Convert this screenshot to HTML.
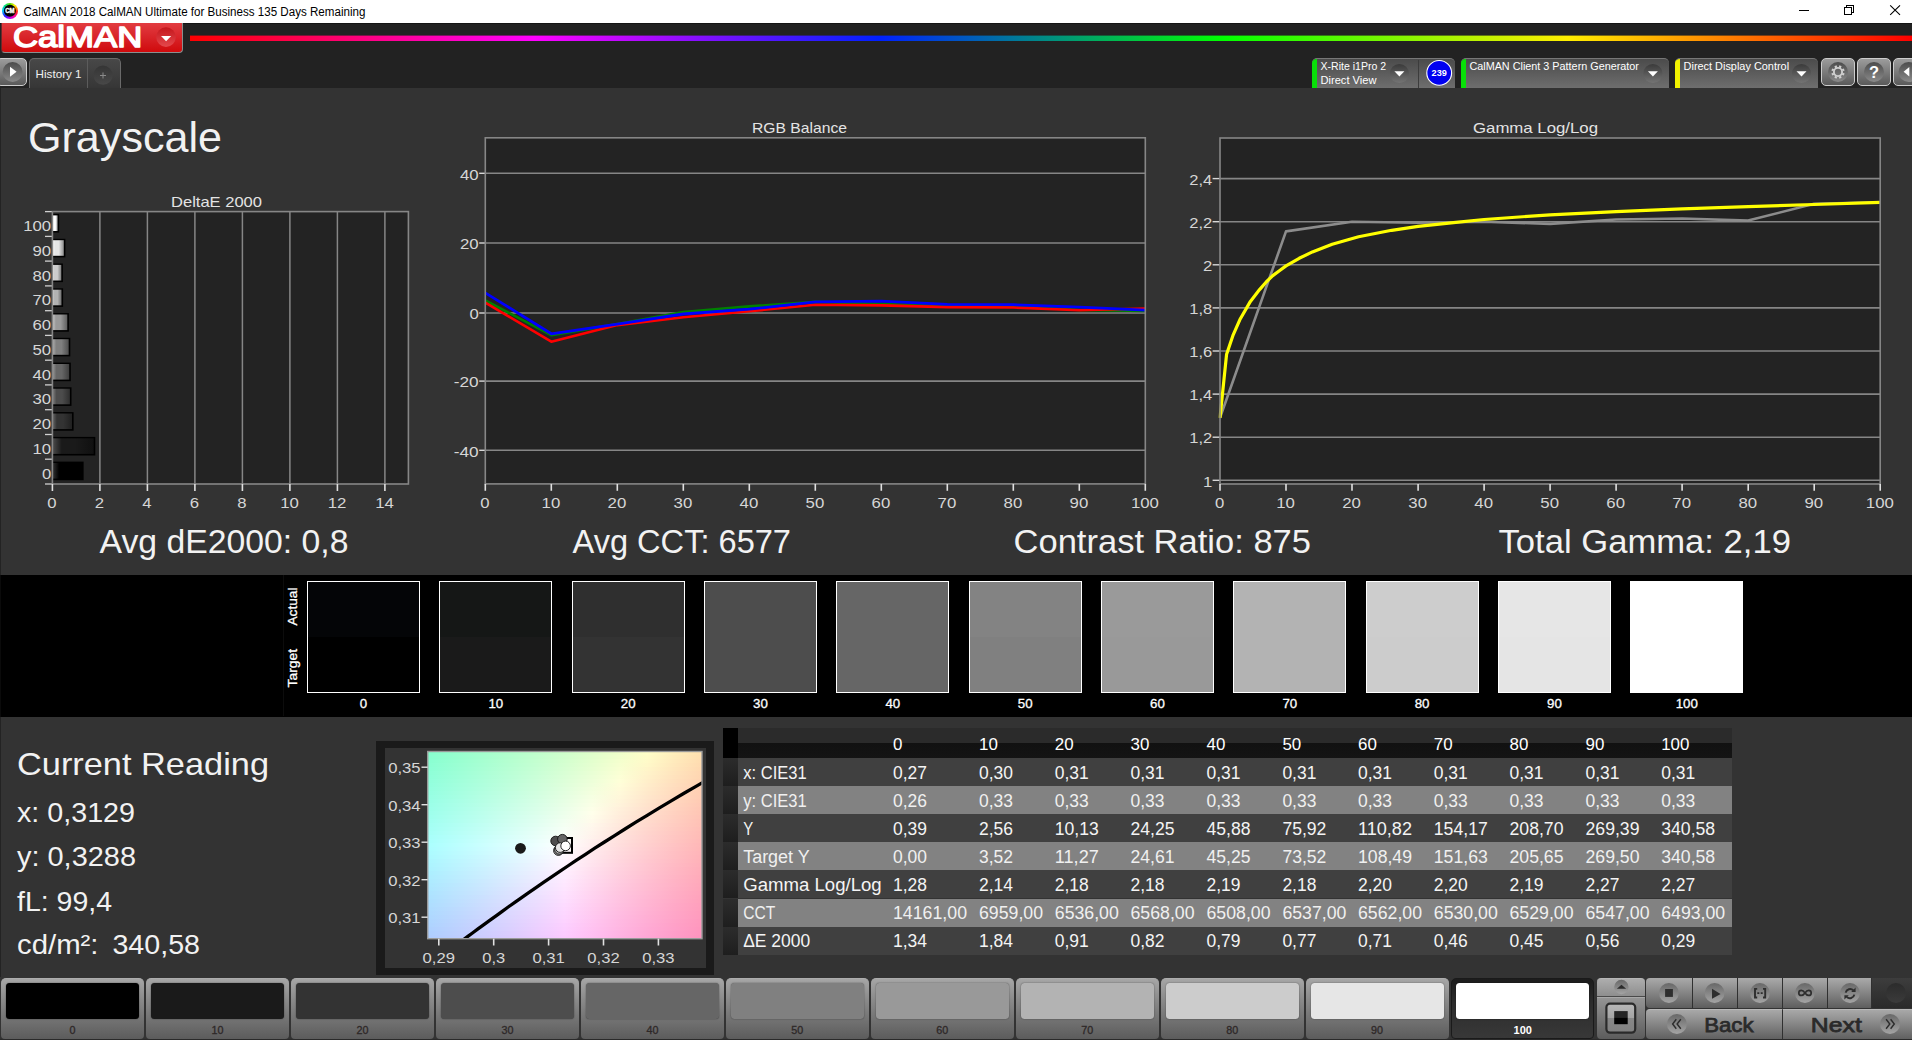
<!DOCTYPE html>
<html lang="en"><head><meta charset="utf-8"><title>CalMAN 2018 - Grayscale</title>
<style>
html,body{margin:0;padding:0;}
body{width:1912px;height:1040px;overflow:hidden;background:#333;position:relative;font-family:"Liberation Sans", sans-serif;}
#root{position:absolute;left:0;top:0;width:1912px;height:1040px;overflow:hidden;}
#root>div{position:absolute;box-sizing:border-box;}
#ov{position:absolute;left:0;top:0;width:1912px;height:1040px;font-family:"Liberation Sans", sans-serif;}
#ov text{white-space:pre;}
</style></head><body>
<div id="root">
<div style="left:0px;top:0px;width:1912px;height:23px;background:#fff;"></div>
<div style="left:1.7px;top:2.6px;width:16.4px;height:16.4px;border-radius:50%;background:conic-gradient(from 0deg,#5d0 0%,#fe0 11%,#f80 19%,#f22 27%,#f0a 40%,#a0f 52%,#22f 63%,#0cf 76%,#0d8 88%,#5d0 100%);filter:blur(0.3px);"></div>
<div style="left:0px;top:23px;width:1912px;height:65px;background:#222;border-top:1px solid #151515;"></div>
<div style="left:189.8px;top:35px;width:1722.2px;height:6.2px;background:linear-gradient(90deg,#ff0000 0%,#ff00ff 20%,#0020ff 40%,#00ff00 60%,#ffee00 80%,#ff0000 100%);opacity:.4;"></div>
<div style="left:189.8px;top:35.7px;width:1722.2px;height:4.9px;background:linear-gradient(90deg,#ff0000 0%,#ff00ff 20%,#0020ff 40%,#00ff00 60%,#ffee00 80%,#ff0000 100%);"></div>
<div style="left:0.6px;top:22.9px;width:182.6px;height:30.2px;background:linear-gradient(#e23c40 0%,#d9262b 45%,#d00a0c 100%);border:1.1px solid #8a8f8f;border-top:none;border-left:1px solid #6a2a2a;border-radius:0 0 4px 4px;"></div>
<div style="left:-4px;top:58px;width:31px;height:28.2px;background:linear-gradient(#9c9c9c,#5a5a5a);border:1px solid #cdcdcd;border-radius:5px;"></div>
<div style="left:29px;top:58px;width:92px;height:30px;background:linear-gradient(#484848,#363636);border:1px solid #6a6a6a;border-bottom:none;border-radius:5px 5px 0 0;"></div>
<div style="left:87px;top:59px;width:1px;height:29px;background:#5c5c5c;"></div>
<div style="left:1311.5px;top:58px;width:143.20000000000005px;height:30px;background:linear-gradient(#4b4b4b,#6e6e6e);border-radius:5px 5px 0 0;border-top:1px solid #777;overflow:hidden;"><div style="position:absolute;left:0;top:-1px;width:5px;height:31px;background:#08e008;"></div></div>
<div style="left:1418px;top:60px;width:1px;height:28px;background:#3c3c3c;"></div>
<div style="left:1460.6px;top:58px;width:208.20000000000005px;height:30px;background:linear-gradient(#4b4b4b,#6e6e6e);border-radius:5px 5px 0 0;border-top:1px solid #777;overflow:hidden;"><div style="position:absolute;left:0;top:-1px;width:5px;height:31px;background:#08e008;"></div></div>
<div style="left:1674.7px;top:58px;width:142.89999999999986px;height:30px;background:linear-gradient(#4b4b4b,#6e6e6e);border-radius:5px 5px 0 0;border-top:1px solid #777;overflow:hidden;"><div style="position:absolute;left:0;top:-1px;width:5px;height:31px;background:#f2f200;"></div></div>
<div style="left:1820.8px;top:58px;width:34.2px;height:28.2px;background:linear-gradient(#9c9c9c,#5a5a5a);border:1px solid #cdcdcd;border-radius:5px;"></div>
<div style="left:1857px;top:58px;width:34px;height:28.2px;background:linear-gradient(#9c9c9c,#5a5a5a);border:1px solid #cdcdcd;border-radius:5px;"></div>
<div style="left:1893px;top:58px;width:37px;height:28.2px;background:linear-gradient(#9c9c9c,#5a5a5a);border:1px solid #cdcdcd;border-radius:5px;"></div>
<div style="left:0px;top:88px;width:1px;height:890px;background:#232323;"></div>
<div style="left:0px;top:574.6px;width:1912px;height:142.7px;background:#000;"></div>
<div style="left:0px;top:574.6px;width:1px;height:142.7px;background:#0a0a0a;"></div>
<div style="left:282.5px;top:575px;width:1px;height:141px;background:#0c0c0c;"></div>
<div style="left:307.0px;top:581px;width:113px;height:112px;border:1px solid #fff;background:linear-gradient(#040507 0,#040507 50%,#000000 50%,#000000 100%);"></div>
<div style="left:439.3px;top:581px;width:113px;height:112px;border:1px solid #fff;background:linear-gradient(#151716 0,#151716 50%,#1a1a1a 50%,#1a1a1a 100%);"></div>
<div style="left:571.7px;top:581px;width:113px;height:112px;border:1px solid #fff;background:linear-gradient(#2f2f2f 0,#2f2f2f 50%,#333333 50%,#333333 100%);"></div>
<div style="left:704.0px;top:581px;width:113px;height:112px;border:1px solid #fff;background:linear-gradient(#4d4d4d 0,#4d4d4d 50%,#4d4d4d 50%,#4d4d4d 100%);"></div>
<div style="left:836.3px;top:581px;width:113px;height:112px;border:1px solid #fff;background:linear-gradient(#666666 0,#666666 50%,#666666 50%,#666666 100%);"></div>
<div style="left:968.7px;top:581px;width:113px;height:112px;border:1px solid #fff;background:linear-gradient(#838383 0,#838383 50%,#808080 50%,#808080 100%);"></div>
<div style="left:1101.0px;top:581px;width:113px;height:112px;border:1px solid #fff;background:linear-gradient(#9a9a9a 0,#9a9a9a 50%,#999999 50%,#999999 100%);"></div>
<div style="left:1233.3px;top:581px;width:113px;height:112px;border:1px solid #fff;background:linear-gradient(#b3b3b3 0,#b3b3b3 50%,#b3b3b3 50%,#b3b3b3 100%);"></div>
<div style="left:1365.6px;top:581px;width:113px;height:112px;border:1px solid #fff;background:linear-gradient(#cdcdcd 0,#cdcdcd 50%,#cccccc 50%,#cccccc 100%);"></div>
<div style="left:1498.0px;top:581px;width:113px;height:112px;border:1px solid #fff;background:linear-gradient(#e6e6e6 0,#e6e6e6 50%,#e5e5e5 50%,#e5e5e5 100%);"></div>
<div style="left:1630.3px;top:581px;width:113px;height:112px;border:1px solid #fff;background:linear-gradient(#ffffff 0,#ffffff 50%,#ffffff 50%,#ffffff 100%);"></div>
<div style="left:376px;top:741px;width:338px;height:234px;background:#1a1a1a;"></div>
<div style="left:384.5px;top:748px;width:321.5px;height:219.5px;background:#333;"></div>
<div style="left:723px;top:728px;width:1009px;height:29.6px;background:linear-gradient(#2b2b2b 0,#2b2b2b 48.5%,#111 50%,#141414 100%);"></div>
<div style="left:723px;top:728px;width:15.2px;height:29.6px;background:#000;"></div>
<div style="left:723px;top:757.6px;width:1009px;height:28.2px;background:#404040;"></div>
<div style="left:723px;top:757.6px;width:15.2px;height:28.2px;background:linear-gradient(#2c2c2c,#1e1e1e);"></div>
<div style="left:723px;top:785.8px;width:1009px;height:28.0px;background:#828282;"></div>
<div style="left:723px;top:785.8px;width:15.2px;height:28.0px;background:linear-gradient(#2c2c2c,#1e1e1e);"></div>
<div style="left:723px;top:813.8px;width:1009px;height:28.2px;background:#404040;"></div>
<div style="left:723px;top:813.8px;width:15.2px;height:28.2px;background:linear-gradient(#2c2c2c,#1e1e1e);"></div>
<div style="left:723px;top:842.0px;width:1009px;height:28.3px;background:#828282;"></div>
<div style="left:723px;top:842.0px;width:15.2px;height:28.3px;background:linear-gradient(#2c2c2c,#1e1e1e);"></div>
<div style="left:723px;top:870.3px;width:1009px;height:28.2px;background:#404040;"></div>
<div style="left:723px;top:870.3px;width:15.2px;height:28.2px;background:linear-gradient(#2c2c2c,#1e1e1e);"></div>
<div style="left:723px;top:898.5px;width:1009px;height:28.3px;background:#828282;"></div>
<div style="left:723px;top:898.5px;width:15.2px;height:28.3px;background:linear-gradient(#2c2c2c,#1e1e1e);"></div>
<div style="left:723px;top:926.8px;width:1009px;height:28.2px;background:#404040;"></div>
<div style="left:723px;top:926.8px;width:15.2px;height:28.2px;background:linear-gradient(#2c2c2c,#1e1e1e);"></div>
<div style="left:0px;top:977px;width:1912px;height:63px;background:#333;"></div>
<div style="left:0px;top:1038.8px;width:1912px;height:1.2px;background:#2a2a2a;"></div>
<div style="left:1.3px;top:977.8px;width:143px;height:61.1px;background:linear-gradient(#a6a6a6,#8a8a8a 35%,#5c5c5c);border-top:1px solid #adadad;border-radius:5px 5px 4px 4px;"></div>
<div style="left:6.3px;top:982.9px;width:133px;height:36px;background:#000000;border-radius:3.5px;box-shadow:0 0 1.5px rgba(0,0,0,.55);"></div>
<div style="left:146.2px;top:977.8px;width:143px;height:61.1px;background:linear-gradient(#a6a6a6,#8a8a8a 35%,#5c5c5c);border-top:1px solid #adadad;border-radius:5px 5px 4px 4px;"></div>
<div style="left:151.2px;top:982.9px;width:133px;height:36px;background:#1a1a1a;border-radius:3.5px;box-shadow:0 0 1.5px rgba(0,0,0,.55);"></div>
<div style="left:291.2px;top:977.8px;width:143px;height:61.1px;background:linear-gradient(#a6a6a6,#8a8a8a 35%,#5c5c5c);border-top:1px solid #adadad;border-radius:5px 5px 4px 4px;"></div>
<div style="left:296.2px;top:982.9px;width:133px;height:36px;background:#333333;border-radius:3.5px;box-shadow:0 0 1.5px rgba(0,0,0,.55);"></div>
<div style="left:436.1px;top:977.8px;width:143px;height:61.1px;background:linear-gradient(#a6a6a6,#8a8a8a 35%,#5c5c5c);border-top:1px solid #adadad;border-radius:5px 5px 4px 4px;"></div>
<div style="left:441.1px;top:982.9px;width:133px;height:36px;background:#4d4d4d;border-radius:3.5px;box-shadow:0 0 1.5px rgba(0,0,0,.55);"></div>
<div style="left:581.1px;top:977.8px;width:143px;height:61.1px;background:linear-gradient(#a6a6a6,#8a8a8a 35%,#5c5c5c);border-top:1px solid #adadad;border-radius:5px 5px 4px 4px;"></div>
<div style="left:586.1px;top:982.9px;width:133px;height:36px;background:#666666;border-radius:3.5px;box-shadow:0 0 1.5px rgba(0,0,0,.55);"></div>
<div style="left:726.0px;top:977.8px;width:143px;height:61.1px;background:linear-gradient(#a6a6a6,#8a8a8a 35%,#5c5c5c);border-top:1px solid #adadad;border-radius:5px 5px 4px 4px;"></div>
<div style="left:731.0px;top:982.9px;width:133px;height:36px;background:#808080;border-radius:3.5px;box-shadow:0 0 1.5px rgba(0,0,0,.55);"></div>
<div style="left:871.0px;top:977.8px;width:143px;height:61.1px;background:linear-gradient(#a6a6a6,#8a8a8a 35%,#5c5c5c);border-top:1px solid #adadad;border-radius:5px 5px 4px 4px;"></div>
<div style="left:876.0px;top:982.9px;width:133px;height:36px;background:#999999;border-radius:3.5px;box-shadow:0 0 1.5px rgba(0,0,0,.55);"></div>
<div style="left:1015.9px;top:977.8px;width:143px;height:61.1px;background:linear-gradient(#a6a6a6,#8a8a8a 35%,#5c5c5c);border-top:1px solid #adadad;border-radius:5px 5px 4px 4px;"></div>
<div style="left:1020.9px;top:982.9px;width:133px;height:36px;background:#b3b3b3;border-radius:3.5px;box-shadow:0 0 1.5px rgba(0,0,0,.55);"></div>
<div style="left:1160.9px;top:977.8px;width:143px;height:61.1px;background:linear-gradient(#a6a6a6,#8a8a8a 35%,#5c5c5c);border-top:1px solid #adadad;border-radius:5px 5px 4px 4px;"></div>
<div style="left:1165.9px;top:982.9px;width:133px;height:36px;background:#cccccc;border-radius:3.5px;box-shadow:0 0 1.5px rgba(0,0,0,.55);"></div>
<div style="left:1305.8px;top:977.8px;width:143px;height:61.1px;background:linear-gradient(#a6a6a6,#8a8a8a 35%,#5c5c5c);border-top:1px solid #adadad;border-radius:5px 5px 4px 4px;"></div>
<div style="left:1310.8px;top:982.9px;width:133px;height:36px;background:#e6e6e6;border-radius:3.5px;box-shadow:0 0 1.5px rgba(0,0,0,.55);"></div>
<div style="left:1450.8px;top:977.8px;width:143px;height:61.1px;background:linear-gradient(#1c1c1c,#2c2c2c 40%,#383838);border:1px solid #1a1a1a;border-radius:5px 5px 4px 4px;"></div>
<div style="left:1455.8px;top:982.9px;width:133px;height:36px;background:#ffffff;border-radius:3.5px;box-shadow:0 0 1.5px rgba(0,0,0,.55);"></div>
<div style="left:1596.9px;top:978px;width:48.1px;height:18.2px;background:linear-gradient(#adadad,#8e8e8e);border-top:1px solid #b6b6b6;border-radius:4px 4px 0 0;"></div>
<div style="left:1596.9px;top:996.2px;width:48.1px;height:1.2px;background:#4a4a4a;"></div>
<div style="left:1596.9px;top:997.2px;width:48.1px;height:41.6px;background:linear-gradient(#949494,#5c5c5c);border-top:1px solid #a8a8a8;border-radius:0 0 4px 4px;"></div>
<div style="left:1645.8px;top:977.8px;width:47.1px;height:30.4px;background:linear-gradient(#aaaaaa,#8c8c8c 40%,#5e5e5e);border-right:1px solid #303030;border-radius:4px 0 0 4px;"></div>
<div style="left:1692.9px;top:977.8px;width:45.1px;height:30.4px;background:linear-gradient(#aaaaaa,#8c8c8c 40%,#5e5e5e);border-right:1px solid #303030;"></div>
<div style="left:1738.0px;top:977.8px;width:45.0px;height:30.4px;background:linear-gradient(#aaaaaa,#8c8c8c 40%,#5e5e5e);border-right:1px solid #303030;"></div>
<div style="left:1783.0px;top:977.8px;width:45.1px;height:30.4px;background:linear-gradient(#aaaaaa,#8c8c8c 40%,#5e5e5e);border-right:1px solid #303030;"></div>
<div style="left:1828.1px;top:977.8px;width:44.1px;height:30.4px;background:linear-gradient(#aaaaaa,#8c8c8c 40%,#5e5e5e);border-right:1px solid #303030;"></div>
<div style="left:1872.2px;top:977.8px;width:40px;height:30.4px;background:linear-gradient(#3d3d3d,#2a2a2a);"></div>
<div style="left:1646px;top:1009.2px;width:137px;height:29.6px;background:linear-gradient(#a8a8a8,#8c8c8c 40%,#606060);border-top:1px solid #b8b8b8;border-right:1px solid #303030;border-radius:4px 0 0 4px;"></div>
<div style="left:1783.2px;top:1009.2px;width:130px;height:29.6px;background:linear-gradient(#a8a8a8,#8c8c8c 40%,#606060);border-top:1px solid #b8b8b8;"></div>
<svg id="ov" width="1912" height="1040" viewBox="0 0 1912 1040">
<defs>
<linearGradient id="rdc" x1="0" y1="0" x2="0" y2="1"><stop offset="0" stop-color="#c4161c"/><stop offset="1" stop-color="#e4484c"/></linearGradient>
<linearGradient id="dkc" x1="0" y1="0" x2="0" y2="1"><stop offset="0" stop-color="#4c4c4c"/><stop offset="1" stop-color="#8a8a8a"/></linearGradient>
<linearGradient id="plc" x1="0" y1="0" x2="0" y2="1"><stop offset="0" stop-color="#353535"/><stop offset="1" stop-color="#484848"/></linearGradient>
<linearGradient id="arc" x1="0" y1="0" x2="0" y2="1"><stop offset="0" stop-color="#3a3a3a"/><stop offset="1" stop-color="#747474"/></linearGradient>
<linearGradient id="bg100" x1="0" y1="0" x2="1" y2="0"><stop offset="0" stop-color="rgb(255,255,255)"/><stop offset="0.22" stop-color="rgb(255,255,255)"/><stop offset="0.55" stop-color="rgb(255,255,255)"/><stop offset="1" stop-color="rgb(158,158,158)"/></linearGradient>
<linearGradient id="bg90" x1="0" y1="0" x2="1" y2="0"><stop offset="0" stop-color="rgb(255,255,255)"/><stop offset="0.22" stop-color="rgb(229,229,229)"/><stop offset="0.55" stop-color="rgb(229,229,229)"/><stop offset="1" stop-color="rgb(142,142,142)"/></linearGradient>
<linearGradient id="bg80" x1="0" y1="0" x2="1" y2="0"><stop offset="0" stop-color="rgb(254,254,254)"/><stop offset="0.22" stop-color="rgb(204,204,204)"/><stop offset="0.55" stop-color="rgb(204,204,204)"/><stop offset="1" stop-color="rgb(126,126,126)"/></linearGradient>
<linearGradient id="bg70" x1="0" y1="0" x2="1" y2="0"><stop offset="0" stop-color="rgb(228,228,228)"/><stop offset="0.22" stop-color="rgb(178,178,178)"/><stop offset="0.55" stop-color="rgb(178,178,178)"/><stop offset="1" stop-color="rgb(110,110,110)"/></linearGradient>
<linearGradient id="bg60" x1="0" y1="0" x2="1" y2="0"><stop offset="0" stop-color="rgb(203,203,203)"/><stop offset="0.22" stop-color="rgb(153,153,153)"/><stop offset="0.55" stop-color="rgb(153,153,153)"/><stop offset="1" stop-color="rgb(95,95,95)"/></linearGradient>
<linearGradient id="bg50" x1="0" y1="0" x2="1" y2="0"><stop offset="0" stop-color="rgb(177,177,177)"/><stop offset="0.22" stop-color="rgb(127,127,127)"/><stop offset="0.55" stop-color="rgb(127,127,127)"/><stop offset="1" stop-color="rgb(79,79,79)"/></linearGradient>
<linearGradient id="bg40" x1="0" y1="0" x2="1" y2="0"><stop offset="0" stop-color="rgb(152,152,152)"/><stop offset="0.22" stop-color="rgb(102,102,102)"/><stop offset="0.55" stop-color="rgb(102,102,102)"/><stop offset="1" stop-color="rgb(63,63,63)"/></linearGradient>
<linearGradient id="bg30" x1="0" y1="0" x2="1" y2="0"><stop offset="0" stop-color="rgb(126,126,126)"/><stop offset="0.22" stop-color="rgb(76,76,76)"/><stop offset="0.55" stop-color="rgb(76,76,76)"/><stop offset="1" stop-color="rgb(47,47,47)"/></linearGradient>
<linearGradient id="bg20" x1="0" y1="0" x2="1" y2="0"><stop offset="0" stop-color="rgb(101,101,101)"/><stop offset="0.22" stop-color="rgb(51,51,51)"/><stop offset="0.55" stop-color="rgb(51,51,51)"/><stop offset="1" stop-color="rgb(32,32,32)"/></linearGradient>
<linearGradient id="bg10" x1="0" y1="0" x2="1" y2="0"><stop offset="0" stop-color="rgb(76,76,76)"/><stop offset="0.22" stop-color="rgb(26,26,26)"/><stop offset="0.55" stop-color="rgb(26,26,26)"/><stop offset="1" stop-color="rgb(16,16,16)"/></linearGradient>
<linearGradient id="bg0" x1="0" y1="0" x2="1" y2="0"><stop offset="0" stop-color="rgb(50,50,50)"/><stop offset="0.22" stop-color="rgb(0,0,0)"/><stop offset="0.55" stop-color="rgb(0,0,0)"/><stop offset="1" stop-color="rgb(0,0,0)"/></linearGradient>
<linearGradient id="cg0" x1="0" y1="0" x2="1" y2="0"><stop offset="0.0000" stop-color="rgb(135,255,206)"/><stop offset="0.1000" stop-color="rgb(149,255,206)"/><stop offset="0.2000" stop-color="rgb(163,255,205)"/><stop offset="0.3000" stop-color="rgb(177,255,204)"/><stop offset="0.4000" stop-color="rgb(192,255,204)"/><stop offset="0.5000" stop-color="rgb(207,255,203)"/><stop offset="0.6000" stop-color="rgb(223,255,202)"/><stop offset="0.7000" stop-color="rgb(239,255,202)"/><stop offset="0.8000" stop-color="rgb(255,254,200)"/><stop offset="0.9000" stop-color="rgb(255,238,187)"/><stop offset="1.0000" stop-color="rgb(255,224,175)"/></linearGradient>
<linearGradient id="cg1" x1="0" y1="0" x2="1" y2="0"><stop offset="0.0000" stop-color="rgb(136,255,208)"/><stop offset="0.1000" stop-color="rgb(150,255,207)"/><stop offset="0.2000" stop-color="rgb(164,255,207)"/><stop offset="0.3000" stop-color="rgb(179,255,206)"/><stop offset="0.4000" stop-color="rgb(194,255,206)"/><stop offset="0.5000" stop-color="rgb(209,255,205)"/><stop offset="0.6000" stop-color="rgb(225,255,204)"/><stop offset="0.7000" stop-color="rgb(241,255,204)"/><stop offset="0.8000" stop-color="rgb(255,252,200)"/><stop offset="0.9000" stop-color="rgb(255,236,187)"/><stop offset="1.0000" stop-color="rgb(255,222,175)"/></linearGradient>
<linearGradient id="cg2" x1="0" y1="0" x2="1" y2="0"><stop offset="0.0000" stop-color="rgb(137,255,210)"/><stop offset="0.1000" stop-color="rgb(151,255,209)"/><stop offset="0.2000" stop-color="rgb(166,255,209)"/><stop offset="0.3000" stop-color="rgb(181,255,208)"/><stop offset="0.4000" stop-color="rgb(196,255,208)"/><stop offset="0.5000" stop-color="rgb(211,255,207)"/><stop offset="0.6000" stop-color="rgb(227,255,206)"/><stop offset="0.7000" stop-color="rgb(244,255,206)"/><stop offset="0.8000" stop-color="rgb(255,250,201)"/><stop offset="0.9000" stop-color="rgb(255,234,188)"/><stop offset="1.0000" stop-color="rgb(255,220,176)"/></linearGradient>
<linearGradient id="cg3" x1="0" y1="0" x2="1" y2="0"><stop offset="0.0000" stop-color="rgb(139,255,212)"/><stop offset="0.1000" stop-color="rgb(153,255,211)"/><stop offset="0.2000" stop-color="rgb(167,255,211)"/><stop offset="0.3000" stop-color="rgb(182,255,210)"/><stop offset="0.4000" stop-color="rgb(197,255,210)"/><stop offset="0.5000" stop-color="rgb(213,255,209)"/><stop offset="0.6000" stop-color="rgb(229,255,208)"/><stop offset="0.7000" stop-color="rgb(246,255,208)"/><stop offset="0.8000" stop-color="rgb(255,248,201)"/><stop offset="0.9000" stop-color="rgb(255,232,188)"/><stop offset="1.0000" stop-color="rgb(255,218,176)"/></linearGradient>
<linearGradient id="cg4" x1="0" y1="0" x2="1" y2="0"><stop offset="0.0000" stop-color="rgb(140,255,214)"/><stop offset="0.1000" stop-color="rgb(154,255,213)"/><stop offset="0.2000" stop-color="rgb(169,255,213)"/><stop offset="0.3000" stop-color="rgb(184,255,212)"/><stop offset="0.4000" stop-color="rgb(199,255,212)"/><stop offset="0.5000" stop-color="rgb(215,255,211)"/><stop offset="0.6000" stop-color="rgb(231,255,210)"/><stop offset="0.7000" stop-color="rgb(248,255,210)"/><stop offset="0.8000" stop-color="rgb(255,245,201)"/><stop offset="0.9000" stop-color="rgb(255,230,188)"/><stop offset="1.0000" stop-color="rgb(255,216,176)"/></linearGradient>
<linearGradient id="cg5" x1="0" y1="0" x2="1" y2="0"><stop offset="0.0000" stop-color="rgb(142,255,216)"/><stop offset="0.1000" stop-color="rgb(156,255,215)"/><stop offset="0.2000" stop-color="rgb(171,255,215)"/><stop offset="0.3000" stop-color="rgb(186,255,214)"/><stop offset="0.4000" stop-color="rgb(201,255,214)"/><stop offset="0.5000" stop-color="rgb(217,255,213)"/><stop offset="0.6000" stop-color="rgb(233,255,213)"/><stop offset="0.7000" stop-color="rgb(250,255,212)"/><stop offset="0.8000" stop-color="rgb(255,243,202)"/><stop offset="0.9000" stop-color="rgb(255,228,189)"/><stop offset="1.0000" stop-color="rgb(255,214,177)"/></linearGradient>
<linearGradient id="cg6" x1="0" y1="0" x2="1" y2="0"><stop offset="0.0000" stop-color="rgb(143,255,218)"/><stop offset="0.1000" stop-color="rgb(157,255,217)"/><stop offset="0.2000" stop-color="rgb(172,255,217)"/><stop offset="0.3000" stop-color="rgb(187,255,216)"/><stop offset="0.4000" stop-color="rgb(203,255,216)"/><stop offset="0.5000" stop-color="rgb(219,255,215)"/><stop offset="0.6000" stop-color="rgb(235,255,215)"/><stop offset="0.7000" stop-color="rgb(252,255,214)"/><stop offset="0.8000" stop-color="rgb(255,241,202)"/><stop offset="0.9000" stop-color="rgb(255,226,189)"/><stop offset="1.0000" stop-color="rgb(255,213,177)"/></linearGradient>
<linearGradient id="cg7" x1="0" y1="0" x2="1" y2="0"><stop offset="0.0000" stop-color="rgb(145,255,220)"/><stop offset="0.1000" stop-color="rgb(159,255,219)"/><stop offset="0.2000" stop-color="rgb(174,255,219)"/><stop offset="0.3000" stop-color="rgb(189,255,218)"/><stop offset="0.4000" stop-color="rgb(205,255,218)"/><stop offset="0.5000" stop-color="rgb(221,255,217)"/><stop offset="0.6000" stop-color="rgb(237,255,217)"/><stop offset="0.7000" stop-color="rgb(254,255,216)"/><stop offset="0.8000" stop-color="rgb(255,239,202)"/><stop offset="0.9000" stop-color="rgb(255,224,189)"/><stop offset="1.0000" stop-color="rgb(255,211,177)"/></linearGradient>
<linearGradient id="cg8" x1="0" y1="0" x2="1" y2="0"><stop offset="0.0000" stop-color="rgb(146,255,222)"/><stop offset="0.1000" stop-color="rgb(161,255,221)"/><stop offset="0.2000" stop-color="rgb(175,255,221)"/><stop offset="0.3000" stop-color="rgb(191,255,220)"/><stop offset="0.4000" stop-color="rgb(207,255,220)"/><stop offset="0.5000" stop-color="rgb(223,255,219)"/><stop offset="0.6000" stop-color="rgb(239,255,219)"/><stop offset="0.7000" stop-color="rgb(255,253,217)"/><stop offset="0.8000" stop-color="rgb(255,237,203)"/><stop offset="0.9000" stop-color="rgb(255,222,190)"/><stop offset="1.0000" stop-color="rgb(255,209,178)"/></linearGradient>
<linearGradient id="cg9" x1="0" y1="0" x2="1" y2="0"><stop offset="0.0000" stop-color="rgb(148,255,224)"/><stop offset="0.1000" stop-color="rgb(162,255,223)"/><stop offset="0.2000" stop-color="rgb(177,255,223)"/><stop offset="0.3000" stop-color="rgb(193,255,222)"/><stop offset="0.4000" stop-color="rgb(208,255,222)"/><stop offset="0.5000" stop-color="rgb(225,255,222)"/><stop offset="0.6000" stop-color="rgb(242,255,221)"/><stop offset="0.7000" stop-color="rgb(255,251,217)"/><stop offset="0.8000" stop-color="rgb(255,235,203)"/><stop offset="0.9000" stop-color="rgb(255,220,190)"/><stop offset="1.0000" stop-color="rgb(255,207,178)"/></linearGradient>
<linearGradient id="cg10" x1="0" y1="0" x2="1" y2="0"><stop offset="0.0000" stop-color="rgb(149,255,226)"/><stop offset="0.1000" stop-color="rgb(164,255,225)"/><stop offset="0.2000" stop-color="rgb(179,255,225)"/><stop offset="0.3000" stop-color="rgb(194,255,225)"/><stop offset="0.4000" stop-color="rgb(210,255,224)"/><stop offset="0.5000" stop-color="rgb(227,255,224)"/><stop offset="0.6000" stop-color="rgb(244,255,223)"/><stop offset="0.7000" stop-color="rgb(255,249,218)"/><stop offset="0.8000" stop-color="rgb(255,233,203)"/><stop offset="0.9000" stop-color="rgb(255,219,190)"/><stop offset="1.0000" stop-color="rgb(255,205,178)"/></linearGradient>
<linearGradient id="cg11" x1="0" y1="0" x2="1" y2="0"><stop offset="0.0000" stop-color="rgb(151,255,228)"/><stop offset="0.1000" stop-color="rgb(165,255,227)"/><stop offset="0.2000" stop-color="rgb(181,255,227)"/><stop offset="0.3000" stop-color="rgb(196,255,227)"/><stop offset="0.4000" stop-color="rgb(212,255,226)"/><stop offset="0.5000" stop-color="rgb(229,255,226)"/><stop offset="0.6000" stop-color="rgb(246,255,226)"/><stop offset="0.7000" stop-color="rgb(255,247,218)"/><stop offset="0.8000" stop-color="rgb(255,231,204)"/><stop offset="0.9000" stop-color="rgb(255,217,191)"/><stop offset="1.0000" stop-color="rgb(255,204,179)"/></linearGradient>
<linearGradient id="cg12" x1="0" y1="0" x2="1" y2="0"><stop offset="0.0000" stop-color="rgb(152,255,230)"/><stop offset="0.1000" stop-color="rgb(167,255,230)"/><stop offset="0.2000" stop-color="rgb(182,255,229)"/><stop offset="0.3000" stop-color="rgb(198,255,229)"/><stop offset="0.4000" stop-color="rgb(214,255,229)"/><stop offset="0.5000" stop-color="rgb(231,255,228)"/><stop offset="0.6000" stop-color="rgb(248,255,228)"/><stop offset="0.7000" stop-color="rgb(255,245,218)"/><stop offset="0.8000" stop-color="rgb(255,229,204)"/><stop offset="0.9000" stop-color="rgb(255,215,191)"/><stop offset="1.0000" stop-color="rgb(255,202,179)"/></linearGradient>
<linearGradient id="cg13" x1="0" y1="0" x2="1" y2="0"><stop offset="0.0000" stop-color="rgb(154,255,232)"/><stop offset="0.1000" stop-color="rgb(169,255,232)"/><stop offset="0.2000" stop-color="rgb(184,255,231)"/><stop offset="0.3000" stop-color="rgb(200,255,231)"/><stop offset="0.4000" stop-color="rgb(216,255,231)"/><stop offset="0.5000" stop-color="rgb(233,255,230)"/><stop offset="0.6000" stop-color="rgb(250,255,230)"/><stop offset="0.7000" stop-color="rgb(255,243,219)"/><stop offset="0.8000" stop-color="rgb(255,227,204)"/><stop offset="0.9000" stop-color="rgb(255,213,191)"/><stop offset="1.0000" stop-color="rgb(255,200,180)"/></linearGradient>
<linearGradient id="cg14" x1="0" y1="0" x2="1" y2="0"><stop offset="0.0000" stop-color="rgb(155,255,234)"/><stop offset="0.1000" stop-color="rgb(170,255,234)"/><stop offset="0.2000" stop-color="rgb(186,255,234)"/><stop offset="0.3000" stop-color="rgb(202,255,233)"/><stop offset="0.4000" stop-color="rgb(218,255,233)"/><stop offset="0.5000" stop-color="rgb(235,255,233)"/><stop offset="0.6000" stop-color="rgb(253,255,232)"/><stop offset="0.7000" stop-color="rgb(255,240,219)"/><stop offset="0.8000" stop-color="rgb(255,225,205)"/><stop offset="0.9000" stop-color="rgb(255,211,192)"/><stop offset="1.0000" stop-color="rgb(255,198,180)"/></linearGradient>
<linearGradient id="cg15" x1="0" y1="0" x2="1" y2="0"><stop offset="0.0000" stop-color="rgb(157,255,236)"/><stop offset="0.1000" stop-color="rgb(172,255,236)"/><stop offset="0.2000" stop-color="rgb(188,255,236)"/><stop offset="0.3000" stop-color="rgb(204,255,236)"/><stop offset="0.4000" stop-color="rgb(220,255,235)"/><stop offset="0.5000" stop-color="rgb(237,255,235)"/><stop offset="0.6000" stop-color="rgb(255,255,235)"/><stop offset="0.7000" stop-color="rgb(255,238,219)"/><stop offset="0.8000" stop-color="rgb(255,223,205)"/><stop offset="0.9000" stop-color="rgb(255,209,192)"/><stop offset="1.0000" stop-color="rgb(255,197,180)"/></linearGradient>
<linearGradient id="cg16" x1="0" y1="0" x2="1" y2="0"><stop offset="0.0000" stop-color="rgb(158,255,238)"/><stop offset="0.1000" stop-color="rgb(174,255,238)"/><stop offset="0.2000" stop-color="rgb(189,255,238)"/><stop offset="0.3000" stop-color="rgb(206,255,238)"/><stop offset="0.4000" stop-color="rgb(222,255,238)"/><stop offset="0.5000" stop-color="rgb(239,255,237)"/><stop offset="0.6000" stop-color="rgb(255,253,235)"/><stop offset="0.7000" stop-color="rgb(255,236,219)"/><stop offset="0.8000" stop-color="rgb(255,221,205)"/><stop offset="0.9000" stop-color="rgb(255,207,192)"/><stop offset="1.0000" stop-color="rgb(255,195,181)"/></linearGradient>
<linearGradient id="cg17" x1="0" y1="0" x2="1" y2="0"><stop offset="0.0000" stop-color="rgb(160,255,241)"/><stop offset="0.1000" stop-color="rgb(175,255,240)"/><stop offset="0.2000" stop-color="rgb(191,255,240)"/><stop offset="0.3000" stop-color="rgb(208,255,240)"/><stop offset="0.4000" stop-color="rgb(224,255,240)"/><stop offset="0.5000" stop-color="rgb(242,255,240)"/><stop offset="0.6000" stop-color="rgb(255,251,235)"/><stop offset="0.7000" stop-color="rgb(255,234,220)"/><stop offset="0.8000" stop-color="rgb(255,219,205)"/><stop offset="0.9000" stop-color="rgb(255,206,193)"/><stop offset="1.0000" stop-color="rgb(255,193,181)"/></linearGradient>
<linearGradient id="cg18" x1="0" y1="0" x2="1" y2="0"><stop offset="0.0000" stop-color="rgb(162,255,243)"/><stop offset="0.1000" stop-color="rgb(177,255,243)"/><stop offset="0.2000" stop-color="rgb(193,255,243)"/><stop offset="0.3000" stop-color="rgb(210,255,242)"/><stop offset="0.4000" stop-color="rgb(226,255,242)"/><stop offset="0.5000" stop-color="rgb(244,255,242)"/><stop offset="0.6000" stop-color="rgb(255,248,236)"/><stop offset="0.7000" stop-color="rgb(255,232,220)"/><stop offset="0.8000" stop-color="rgb(255,217,206)"/><stop offset="0.9000" stop-color="rgb(255,204,193)"/><stop offset="1.0000" stop-color="rgb(255,192,181)"/></linearGradient>
<linearGradient id="cg19" x1="0" y1="0" x2="1" y2="0"><stop offset="0.0000" stop-color="rgb(163,255,245)"/><stop offset="0.1000" stop-color="rgb(179,255,245)"/><stop offset="0.2000" stop-color="rgb(195,255,245)"/><stop offset="0.3000" stop-color="rgb(212,255,245)"/><stop offset="0.4000" stop-color="rgb(229,255,245)"/><stop offset="0.5000" stop-color="rgb(246,255,245)"/><stop offset="0.6000" stop-color="rgb(255,246,236)"/><stop offset="0.7000" stop-color="rgb(255,230,220)"/><stop offset="0.8000" stop-color="rgb(255,215,206)"/><stop offset="0.9000" stop-color="rgb(255,202,193)"/><stop offset="1.0000" stop-color="rgb(255,190,182)"/></linearGradient>
<linearGradient id="cg20" x1="0" y1="0" x2="1" y2="0"><stop offset="0.0000" stop-color="rgb(165,255,247)"/><stop offset="0.1000" stop-color="rgb(181,255,247)"/><stop offset="0.2000" stop-color="rgb(197,255,247)"/><stop offset="0.3000" stop-color="rgb(214,255,247)"/><stop offset="0.4000" stop-color="rgb(231,255,247)"/><stop offset="0.5000" stop-color="rgb(248,255,247)"/><stop offset="0.6000" stop-color="rgb(255,244,236)"/><stop offset="0.7000" stop-color="rgb(255,228,220)"/><stop offset="0.8000" stop-color="rgb(255,213,206)"/><stop offset="0.9000" stop-color="rgb(255,200,194)"/><stop offset="1.0000" stop-color="rgb(255,188,182)"/></linearGradient>
<linearGradient id="cg21" x1="0" y1="0" x2="1" y2="0"><stop offset="0.0000" stop-color="rgb(167,255,250)"/><stop offset="0.1000" stop-color="rgb(182,255,250)"/><stop offset="0.2000" stop-color="rgb(199,255,250)"/><stop offset="0.3000" stop-color="rgb(216,255,250)"/><stop offset="0.4000" stop-color="rgb(233,255,249)"/><stop offset="0.5000" stop-color="rgb(251,255,249)"/><stop offset="0.6000" stop-color="rgb(255,242,236)"/><stop offset="0.7000" stop-color="rgb(255,226,221)"/><stop offset="0.8000" stop-color="rgb(255,211,207)"/><stop offset="0.9000" stop-color="rgb(255,198,194)"/><stop offset="1.0000" stop-color="rgb(255,187,182)"/></linearGradient>
<linearGradient id="cg22" x1="0" y1="0" x2="1" y2="0"><stop offset="0.0000" stop-color="rgb(168,255,252)"/><stop offset="0.1000" stop-color="rgb(184,255,252)"/><stop offset="0.2000" stop-color="rgb(201,255,252)"/><stop offset="0.3000" stop-color="rgb(218,255,252)"/><stop offset="0.4000" stop-color="rgb(235,255,252)"/><stop offset="0.5000" stop-color="rgb(253,255,252)"/><stop offset="0.6000" stop-color="rgb(255,239,237)"/><stop offset="0.7000" stop-color="rgb(255,224,221)"/><stop offset="0.8000" stop-color="rgb(255,210,207)"/><stop offset="0.9000" stop-color="rgb(255,197,194)"/><stop offset="1.0000" stop-color="rgb(255,185,183)"/></linearGradient>
<linearGradient id="cg23" x1="0" y1="0" x2="1" y2="0"><stop offset="0.0000" stop-color="rgb(170,255,254)"/><stop offset="0.1000" stop-color="rgb(186,255,254)"/><stop offset="0.2000" stop-color="rgb(203,255,254)"/><stop offset="0.3000" stop-color="rgb(220,255,254)"/><stop offset="0.4000" stop-color="rgb(237,255,254)"/><stop offset="0.5000" stop-color="rgb(255,255,254)"/><stop offset="0.6000" stop-color="rgb(255,237,237)"/><stop offset="0.7000" stop-color="rgb(255,222,221)"/><stop offset="0.8000" stop-color="rgb(255,208,207)"/><stop offset="0.9000" stop-color="rgb(255,195,195)"/><stop offset="1.0000" stop-color="rgb(255,183,183)"/></linearGradient>
<linearGradient id="cg24" x1="0" y1="0" x2="1" y2="0"><stop offset="0.0000" stop-color="rgb(171,253,255)"/><stop offset="0.1000" stop-color="rgb(187,253,255)"/><stop offset="0.2000" stop-color="rgb(203,253,255)"/><stop offset="0.3000" stop-color="rgb(220,253,255)"/><stop offset="0.4000" stop-color="rgb(238,253,255)"/><stop offset="0.5000" stop-color="rgb(255,252,254)"/><stop offset="0.6000" stop-color="rgb(255,235,237)"/><stop offset="0.7000" stop-color="rgb(255,220,222)"/><stop offset="0.8000" stop-color="rgb(255,206,208)"/><stop offset="0.9000" stop-color="rgb(255,193,195)"/><stop offset="1.0000" stop-color="rgb(255,182,183)"/></linearGradient>
<linearGradient id="cg25" x1="0" y1="0" x2="1" y2="0"><stop offset="0.0000" stop-color="rgb(171,251,255)"/><stop offset="0.1000" stop-color="rgb(187,251,255)"/><stop offset="0.2000" stop-color="rgb(203,251,255)"/><stop offset="0.3000" stop-color="rgb(220,251,255)"/><stop offset="0.4000" stop-color="rgb(238,251,255)"/><stop offset="0.5000" stop-color="rgb(255,250,254)"/><stop offset="0.6000" stop-color="rgb(255,233,237)"/><stop offset="0.7000" stop-color="rgb(255,218,222)"/><stop offset="0.8000" stop-color="rgb(255,204,208)"/><stop offset="0.9000" stop-color="rgb(255,191,195)"/><stop offset="1.0000" stop-color="rgb(255,180,184)"/></linearGradient>
<linearGradient id="cg26" x1="0" y1="0" x2="1" y2="0"><stop offset="0.0000" stop-color="rgb(171,249,255)"/><stop offset="0.1000" stop-color="rgb(187,249,255)"/><stop offset="0.2000" stop-color="rgb(203,248,255)"/><stop offset="0.3000" stop-color="rgb(220,248,255)"/><stop offset="0.4000" stop-color="rgb(237,248,255)"/><stop offset="0.5000" stop-color="rgb(255,248,255)"/><stop offset="0.6000" stop-color="rgb(255,231,237)"/><stop offset="0.7000" stop-color="rgb(255,216,222)"/><stop offset="0.8000" stop-color="rgb(255,202,208)"/><stop offset="0.9000" stop-color="rgb(255,190,195)"/><stop offset="1.0000" stop-color="rgb(255,178,184)"/></linearGradient>
<linearGradient id="cg27" x1="0" y1="0" x2="1" y2="0"><stop offset="0.0000" stop-color="rgb(171,246,255)"/><stop offset="0.1000" stop-color="rgb(187,246,255)"/><stop offset="0.2000" stop-color="rgb(203,246,255)"/><stop offset="0.3000" stop-color="rgb(220,246,255)"/><stop offset="0.4000" stop-color="rgb(237,246,255)"/><stop offset="0.5000" stop-color="rgb(255,245,255)"/><stop offset="0.6000" stop-color="rgb(255,229,238)"/><stop offset="0.7000" stop-color="rgb(255,214,222)"/><stop offset="0.8000" stop-color="rgb(255,200,208)"/><stop offset="0.9000" stop-color="rgb(255,188,196)"/><stop offset="1.0000" stop-color="rgb(255,177,184)"/></linearGradient>
<linearGradient id="cg28" x1="0" y1="0" x2="1" y2="0"><stop offset="0.0000" stop-color="rgb(171,244,255)"/><stop offset="0.1000" stop-color="rgb(187,244,255)"/><stop offset="0.2000" stop-color="rgb(203,244,255)"/><stop offset="0.3000" stop-color="rgb(220,243,255)"/><stop offset="0.4000" stop-color="rgb(237,243,255)"/><stop offset="0.5000" stop-color="rgb(255,243,255)"/><stop offset="0.6000" stop-color="rgb(255,227,238)"/><stop offset="0.7000" stop-color="rgb(255,212,223)"/><stop offset="0.8000" stop-color="rgb(255,198,209)"/><stop offset="0.9000" stop-color="rgb(255,186,196)"/><stop offset="1.0000" stop-color="rgb(255,175,185)"/></linearGradient>
<linearGradient id="cg29" x1="0" y1="0" x2="1" y2="0"><stop offset="0.0000" stop-color="rgb(171,242,255)"/><stop offset="0.1000" stop-color="rgb(187,242,255)"/><stop offset="0.2000" stop-color="rgb(203,241,255)"/><stop offset="0.3000" stop-color="rgb(220,241,255)"/><stop offset="0.4000" stop-color="rgb(237,241,255)"/><stop offset="0.5000" stop-color="rgb(255,241,255)"/><stop offset="0.6000" stop-color="rgb(255,224,238)"/><stop offset="0.7000" stop-color="rgb(255,210,223)"/><stop offset="0.8000" stop-color="rgb(255,197,209)"/><stop offset="0.9000" stop-color="rgb(255,184,196)"/><stop offset="1.0000" stop-color="rgb(255,173,185)"/></linearGradient>
<linearGradient id="cg30" x1="0" y1="0" x2="1" y2="0"><stop offset="0.0000" stop-color="rgb(171,239,255)"/><stop offset="0.1000" stop-color="rgb(187,239,255)"/><stop offset="0.2000" stop-color="rgb(203,239,255)"/><stop offset="0.3000" stop-color="rgb(220,239,255)"/><stop offset="0.4000" stop-color="rgb(237,238,255)"/><stop offset="0.5000" stop-color="rgb(255,238,255)"/><stop offset="0.6000" stop-color="rgb(255,222,238)"/><stop offset="0.7000" stop-color="rgb(255,208,223)"/><stop offset="0.8000" stop-color="rgb(255,195,209)"/><stop offset="0.9000" stop-color="rgb(255,183,197)"/><stop offset="1.0000" stop-color="rgb(255,172,185)"/></linearGradient>
<linearGradient id="cg31" x1="0" y1="0" x2="1" y2="0"><stop offset="0.0000" stop-color="rgb(172,237,255)"/><stop offset="0.1000" stop-color="rgb(187,237,255)"/><stop offset="0.2000" stop-color="rgb(203,237,255)"/><stop offset="0.3000" stop-color="rgb(220,236,255)"/><stop offset="0.4000" stop-color="rgb(237,236,255)"/><stop offset="0.5000" stop-color="rgb(254,236,255)"/><stop offset="0.6000" stop-color="rgb(255,220,239)"/><stop offset="0.7000" stop-color="rgb(255,206,223)"/><stop offset="0.8000" stop-color="rgb(255,193,210)"/><stop offset="0.9000" stop-color="rgb(255,181,197)"/><stop offset="1.0000" stop-color="rgb(255,170,185)"/></linearGradient>
<linearGradient id="cg32" x1="0" y1="0" x2="1" y2="0"><stop offset="0.0000" stop-color="rgb(172,235,255)"/><stop offset="0.1000" stop-color="rgb(187,235,255)"/><stop offset="0.2000" stop-color="rgb(203,234,255)"/><stop offset="0.3000" stop-color="rgb(220,234,255)"/><stop offset="0.4000" stop-color="rgb(237,234,255)"/><stop offset="0.5000" stop-color="rgb(254,233,255)"/><stop offset="0.6000" stop-color="rgb(255,218,239)"/><stop offset="0.7000" stop-color="rgb(255,204,224)"/><stop offset="0.8000" stop-color="rgb(255,191,210)"/><stop offset="0.9000" stop-color="rgb(255,179,197)"/><stop offset="1.0000" stop-color="rgb(255,169,186)"/></linearGradient>
<linearGradient id="cg33" x1="0" y1="0" x2="1" y2="0"><stop offset="0.0000" stop-color="rgb(172,233,255)"/><stop offset="0.1000" stop-color="rgb(187,232,255)"/><stop offset="0.2000" stop-color="rgb(203,232,255)"/><stop offset="0.3000" stop-color="rgb(220,232,255)"/><stop offset="0.4000" stop-color="rgb(237,231,255)"/><stop offset="0.5000" stop-color="rgb(254,231,255)"/><stop offset="0.6000" stop-color="rgb(255,216,239)"/><stop offset="0.7000" stop-color="rgb(255,202,224)"/><stop offset="0.8000" stop-color="rgb(255,189,210)"/><stop offset="0.9000" stop-color="rgb(255,178,198)"/><stop offset="1.0000" stop-color="rgb(255,167,186)"/></linearGradient>
<linearGradient id="cg34" x1="0" y1="0" x2="1" y2="0"><stop offset="0.0000" stop-color="rgb(172,231,255)"/><stop offset="0.1000" stop-color="rgb(188,230,255)"/><stop offset="0.2000" stop-color="rgb(203,230,255)"/><stop offset="0.3000" stop-color="rgb(220,229,255)"/><stop offset="0.4000" stop-color="rgb(237,229,255)"/><stop offset="0.5000" stop-color="rgb(254,229,255)"/><stop offset="0.6000" stop-color="rgb(255,214,239)"/><stop offset="0.7000" stop-color="rgb(255,200,224)"/><stop offset="0.8000" stop-color="rgb(255,188,210)"/><stop offset="0.9000" stop-color="rgb(255,176,198)"/><stop offset="1.0000" stop-color="rgb(255,166,186)"/></linearGradient>
<linearGradient id="cg35" x1="0" y1="0" x2="1" y2="0"><stop offset="0.0000" stop-color="rgb(172,228,255)"/><stop offset="0.1000" stop-color="rgb(188,228,255)"/><stop offset="0.2000" stop-color="rgb(203,228,255)"/><stop offset="0.3000" stop-color="rgb(220,227,255)"/><stop offset="0.4000" stop-color="rgb(237,227,255)"/><stop offset="0.5000" stop-color="rgb(254,226,255)"/><stop offset="0.6000" stop-color="rgb(255,212,239)"/><stop offset="0.7000" stop-color="rgb(255,198,224)"/><stop offset="0.8000" stop-color="rgb(255,186,211)"/><stop offset="0.9000" stop-color="rgb(255,174,198)"/><stop offset="1.0000" stop-color="rgb(255,164,187)"/></linearGradient>
<linearGradient id="cg36" x1="0" y1="0" x2="1" y2="0"><stop offset="0.0000" stop-color="rgb(172,226,255)"/><stop offset="0.1000" stop-color="rgb(188,226,255)"/><stop offset="0.2000" stop-color="rgb(203,225,255)"/><stop offset="0.3000" stop-color="rgb(220,225,255)"/><stop offset="0.4000" stop-color="rgb(236,224,255)"/><stop offset="0.5000" stop-color="rgb(254,224,255)"/><stop offset="0.6000" stop-color="rgb(255,210,240)"/><stop offset="0.7000" stop-color="rgb(255,196,225)"/><stop offset="0.8000" stop-color="rgb(255,184,211)"/><stop offset="0.9000" stop-color="rgb(255,173,198)"/><stop offset="1.0000" stop-color="rgb(255,162,187)"/></linearGradient>
<linearGradient id="cg37" x1="0" y1="0" x2="1" y2="0"><stop offset="0.0000" stop-color="rgb(172,224,255)"/><stop offset="0.1000" stop-color="rgb(188,224,255)"/><stop offset="0.2000" stop-color="rgb(204,223,255)"/><stop offset="0.3000" stop-color="rgb(220,223,255)"/><stop offset="0.4000" stop-color="rgb(236,222,255)"/><stop offset="0.5000" stop-color="rgb(253,222,255)"/><stop offset="0.6000" stop-color="rgb(255,208,240)"/><stop offset="0.7000" stop-color="rgb(255,195,225)"/><stop offset="0.8000" stop-color="rgb(255,182,211)"/><stop offset="0.9000" stop-color="rgb(255,171,199)"/><stop offset="1.0000" stop-color="rgb(255,161,187)"/></linearGradient>
<linearGradient id="cg38" x1="0" y1="0" x2="1" y2="0"><stop offset="0.0000" stop-color="rgb(173,222,255)"/><stop offset="0.1000" stop-color="rgb(188,222,255)"/><stop offset="0.2000" stop-color="rgb(204,221,255)"/><stop offset="0.3000" stop-color="rgb(220,221,255)"/><stop offset="0.4000" stop-color="rgb(236,220,255)"/><stop offset="0.5000" stop-color="rgb(253,219,255)"/><stop offset="0.6000" stop-color="rgb(255,206,240)"/><stop offset="0.7000" stop-color="rgb(255,193,225)"/><stop offset="0.8000" stop-color="rgb(255,181,211)"/><stop offset="0.9000" stop-color="rgb(255,169,199)"/><stop offset="1.0000" stop-color="rgb(255,159,188)"/></linearGradient>
<linearGradient id="cg39" x1="0" y1="0" x2="1" y2="0"><stop offset="0.0000" stop-color="rgb(173,220,255)"/><stop offset="0.1000" stop-color="rgb(188,219,255)"/><stop offset="0.2000" stop-color="rgb(204,219,255)"/><stop offset="0.3000" stop-color="rgb(220,218,255)"/><stop offset="0.4000" stop-color="rgb(236,218,255)"/><stop offset="0.5000" stop-color="rgb(253,217,255)"/><stop offset="0.6000" stop-color="rgb(255,204,240)"/><stop offset="0.7000" stop-color="rgb(255,191,225)"/><stop offset="0.8000" stop-color="rgb(255,179,212)"/><stop offset="0.9000" stop-color="rgb(255,168,199)"/><stop offset="1.0000" stop-color="rgb(255,158,188)"/></linearGradient>
<linearGradient id="cg40" x1="0" y1="0" x2="1" y2="0"><stop offset="0.0000" stop-color="rgb(173,218,255)"/><stop offset="0.1000" stop-color="rgb(188,217,255)"/><stop offset="0.2000" stop-color="rgb(204,217,255)"/><stop offset="0.3000" stop-color="rgb(220,216,255)"/><stop offset="0.4000" stop-color="rgb(236,216,255)"/><stop offset="0.5000" stop-color="rgb(253,215,255)"/><stop offset="0.6000" stop-color="rgb(255,202,240)"/><stop offset="0.7000" stop-color="rgb(255,189,226)"/><stop offset="0.8000" stop-color="rgb(255,177,212)"/><stop offset="0.9000" stop-color="rgb(255,166,200)"/><stop offset="1.0000" stop-color="rgb(255,156,188)"/></linearGradient>
<linearGradient id="cg41" x1="0" y1="0" x2="1" y2="0"><stop offset="0.0000" stop-color="rgb(173,216,255)"/><stop offset="0.1000" stop-color="rgb(188,215,255)"/><stop offset="0.2000" stop-color="rgb(204,215,255)"/><stop offset="0.3000" stop-color="rgb(220,214,255)"/><stop offset="0.4000" stop-color="rgb(236,213,255)"/><stop offset="0.5000" stop-color="rgb(253,213,255)"/><stop offset="0.6000" stop-color="rgb(255,200,241)"/><stop offset="0.7000" stop-color="rgb(255,187,226)"/><stop offset="0.8000" stop-color="rgb(255,175,212)"/><stop offset="0.9000" stop-color="rgb(255,165,200)"/><stop offset="1.0000" stop-color="rgb(255,155,189)"/></linearGradient>
<linearGradient id="cg42" x1="0" y1="0" x2="1" y2="0"><stop offset="0.0000" stop-color="rgb(173,214,255)"/><stop offset="0.1000" stop-color="rgb(188,213,255)"/><stop offset="0.2000" stop-color="rgb(204,212,255)"/><stop offset="0.3000" stop-color="rgb(220,212,255)"/><stop offset="0.4000" stop-color="rgb(236,211,255)"/><stop offset="0.5000" stop-color="rgb(253,211,255)"/><stop offset="0.6000" stop-color="rgb(255,198,241)"/><stop offset="0.7000" stop-color="rgb(255,185,226)"/><stop offset="0.8000" stop-color="rgb(255,174,213)"/><stop offset="0.9000" stop-color="rgb(255,163,200)"/><stop offset="1.0000" stop-color="rgb(255,153,189)"/></linearGradient>
<linearGradient id="cg43" x1="0" y1="0" x2="1" y2="0"><stop offset="0.0000" stop-color="rgb(173,212,255)"/><stop offset="0.1000" stop-color="rgb(188,211,255)"/><stop offset="0.2000" stop-color="rgb(204,210,255)"/><stop offset="0.3000" stop-color="rgb(219,210,255)"/><stop offset="0.4000" stop-color="rgb(236,209,255)"/><stop offset="0.5000" stop-color="rgb(252,208,255)"/><stop offset="0.6000" stop-color="rgb(255,196,241)"/><stop offset="0.7000" stop-color="rgb(255,184,226)"/><stop offset="0.8000" stop-color="rgb(255,172,213)"/><stop offset="0.9000" stop-color="rgb(255,161,200)"/><stop offset="1.0000" stop-color="rgb(255,152,189)"/></linearGradient>
<linearGradient id="cg44" x1="0" y1="0" x2="1" y2="0"><stop offset="0.0000" stop-color="rgb(173,209,255)"/><stop offset="0.1000" stop-color="rgb(188,209,255)"/><stop offset="0.2000" stop-color="rgb(204,208,255)"/><stop offset="0.3000" stop-color="rgb(219,208,255)"/><stop offset="0.4000" stop-color="rgb(236,207,255)"/><stop offset="0.5000" stop-color="rgb(252,206,255)"/><stop offset="0.6000" stop-color="rgb(255,194,241)"/><stop offset="0.7000" stop-color="rgb(255,182,226)"/><stop offset="0.8000" stop-color="rgb(255,170,213)"/><stop offset="0.9000" stop-color="rgb(255,160,201)"/><stop offset="1.0000" stop-color="rgb(255,150,189)"/></linearGradient>
<linearGradient id="cg45" x1="0" y1="0" x2="1" y2="0"><stop offset="0.0000" stop-color="rgb(173,207,255)"/><stop offset="0.1000" stop-color="rgb(188,207,255)"/><stop offset="0.2000" stop-color="rgb(204,206,255)"/><stop offset="0.3000" stop-color="rgb(219,205,255)"/><stop offset="0.4000" stop-color="rgb(236,205,255)"/><stop offset="0.5000" stop-color="rgb(252,204,255)"/><stop offset="0.6000" stop-color="rgb(255,192,242)"/><stop offset="0.7000" stop-color="rgb(255,180,227)"/><stop offset="0.8000" stop-color="rgb(255,169,213)"/><stop offset="0.9000" stop-color="rgb(255,158,201)"/><stop offset="1.0000" stop-color="rgb(255,149,190)"/></linearGradient>
<linearGradient id="cg46" x1="0" y1="0" x2="1" y2="0"><stop offset="0.0000" stop-color="rgb(174,205,255)"/><stop offset="0.1000" stop-color="rgb(188,205,255)"/><stop offset="0.2000" stop-color="rgb(204,204,255)"/><stop offset="0.3000" stop-color="rgb(219,203,255)"/><stop offset="0.4000" stop-color="rgb(235,203,255)"/><stop offset="0.5000" stop-color="rgb(252,202,255)"/><stop offset="0.6000" stop-color="rgb(255,191,242)"/><stop offset="0.7000" stop-color="rgb(255,178,227)"/><stop offset="0.8000" stop-color="rgb(255,167,214)"/><stop offset="0.9000" stop-color="rgb(255,157,201)"/><stop offset="1.0000" stop-color="rgb(255,147,190)"/></linearGradient>
<linearGradient id="lgc" x1="0" y1="0" x2="0" y2="1"><stop offset="0" stop-color="#686868"/><stop offset="1" stop-color="#a4a4a4"/></linearGradient>
<linearGradient id="sqg" x1="0" y1="0" x2="0" y2="1"><stop offset="0" stop-color="#b8b8b8"/><stop offset="0.49" stop-color="#a4a4a4"/><stop offset="0.5" stop-color="#888888"/><stop offset="1" stop-color="#808080"/></linearGradient>
<linearGradient id="dk2" x1="0" y1="0" x2="0" y2="1"><stop offset="0" stop-color="#2b2b2b"/><stop offset="1" stop-color="#3b3b3b"/></linearGradient>
</defs>
<circle cx="9.9" cy="10.8" r="6" fill="#000"/>
<text x="9.9" y="13.1" font-size="6.6" fill="#fff" text-anchor="middle" font-weight="bold" textLength="9.4" lengthAdjust="spacingAndGlyphs" stroke="#fff" stroke-width="0.35">CM</text>
<text x="23.4" y="16" font-size="12" fill="#000" textLength="342" lengthAdjust="spacingAndGlyphs">CalMAN 2018 CalMAN Ultimate for Business 135 Days Remaining</text>
<path d="M1799 10.5h10" stroke="#000" stroke-width="1" fill="none"/>
<path d="M1844.5 7.5h7v7h-7z M1846.5 7.500v-2h7v7h-2" stroke="#000" stroke-width="1" fill="none" shape-rendering="crispEdges"/>
<path d="M1890.200 5.300l9.800 9.600M1900 5.300l-9.800 9.600" stroke="#000" stroke-width="1.1" fill="none"/>
<text x="13" y="47.1" font-size="29.2" fill="#fff" textLength="129.2" lengthAdjust="spacingAndGlyphs" stroke="#fff" stroke-width="1.5" stroke-linejoin="round" stroke-linecap="round">CalMAN</text>
<circle cx="166" cy="37.1" r="9.8" fill="url(#rdc)"/><path d="M161 36h10.200l-5.100 5.200z" fill="#fff"/>
<circle cx="12.6" cy="72" r="10" fill="url(#dkc)"/><path d="M10 66.8v10l6.6-5z" fill="#fff"/>
<text x="35.6" y="78" font-size="11.4" fill="#f0f0f0" textLength="46" lengthAdjust="spacingAndGlyphs">History 1</text>
<circle cx="103" cy="75.2" r="9.6" fill="url(#plc)"/><path d="M100 75.5h6M103 72.5v6" stroke="#8a8a8a" stroke-width="1" fill="none"/>
<text x="1320.5" y="69.9" font-size="11" fill="#fff" textLength="65.6" lengthAdjust="spacingAndGlyphs">X-Rite i1Pro 2</text>
<text x="1320.5" y="83.8" font-size="11" fill="#fff" textLength="56" lengthAdjust="spacingAndGlyphs">Direct View</text>
<circle cx="1399.4" cy="73.5" r="9.6" fill="url(#arc)"/><path d="M1394.4 71.2h10l-5 5.2z" fill="#fff"/>
<circle cx="1439.2" cy="72.9" r="12.4" fill="#0000f0" stroke="#fff" stroke-width="1.1"/>
<text x="1439.2" y="76.2" font-size="9.2" fill="#fff" text-anchor="middle" font-weight="bold" textLength="15.2" lengthAdjust="spacingAndGlyphs">239</text>
<text x="1469.4" y="69.9" font-size="11" fill="#fff" textLength="169.6" lengthAdjust="spacingAndGlyphs">CalMAN Client 3 Pattern Generator</text>
<circle cx="1652.9" cy="73.5" r="9.6" fill="url(#arc)"/><path d="M1647.9 71.2h10l-5 5.2z" fill="#fff"/>
<text x="1683.6" y="69.9" font-size="11" fill="#fff" textLength="105.5" lengthAdjust="spacingAndGlyphs">Direct Display Control</text>
<circle cx="1801.5" cy="73.5" r="9.6" fill="url(#arc)"/><path d="M1796.5 71.2h10l-5 5.2z" fill="#fff"/>
<circle cx="1838" cy="72" r="10" fill="url(#dkc)"/>
<path d="M1842.25 73.76L1844.19 74.56" stroke="#cfcfcf" stroke-width="2.3" fill="none"/><path d="M1839.76 76.25L1840.56 78.19" stroke="#cfcfcf" stroke-width="2.3" fill="none"/><path d="M1836.24 76.25L1835.44 78.19" stroke="#cfcfcf" stroke-width="2.3" fill="none"/><path d="M1833.75 73.76L1831.81 74.56" stroke="#cfcfcf" stroke-width="2.3" fill="none"/><path d="M1833.75 70.24L1831.81 69.44" stroke="#cfcfcf" stroke-width="2.3" fill="none"/><path d="M1836.24 67.75L1835.44 65.81" stroke="#cfcfcf" stroke-width="2.3" fill="none"/><path d="M1839.76 67.75L1840.56 65.81" stroke="#cfcfcf" stroke-width="2.3" fill="none"/><path d="M1842.25 70.24L1844.19 69.44" stroke="#cfcfcf" stroke-width="2.3" fill="none"/><circle cx="1838" cy="72" r="4.1" fill="none" stroke="#cfcfcf" stroke-width="1.9"/>
<circle cx="1874" cy="72" r="10" fill="url(#dkc)"/>
<text x="1874" y="78" font-size="16.5" fill="#fff" text-anchor="middle" font-weight="bold">?</text>
<circle cx="1908.6" cy="72" r="10" fill="url(#dkc)"/><path d="M1909.300 67v9.600l-5.700-4.800z" fill="#fff"/>
<text x="28.0" y="151.6" font-size="43.2" fill="#f2f2f2" textLength="194" lengthAdjust="spacingAndGlyphs">Grayscale</text>
<text x="216.5" y="207.3" font-size="15" fill="#e4e4e4" text-anchor="middle" textLength="91" lengthAdjust="spacingAndGlyphs">DeltaE 2000</text>
<rect x="52.4" y="211.6" width="356.0" height="272.4" fill="#232323"/>
<path d="M99.9 211.6V484.0" stroke="#868686" stroke-width="1.5"/>
<path d="M147.4 211.6V484.0" stroke="#868686" stroke-width="1.5"/>
<path d="M194.9 211.6V484.0" stroke="#868686" stroke-width="1.5"/>
<path d="M242.4 211.6V484.0" stroke="#868686" stroke-width="1.5"/>
<path d="M289.9 211.6V484.0" stroke="#868686" stroke-width="1.5"/>
<path d="M337.4 211.6V484.0" stroke="#868686" stroke-width="1.5"/>
<path d="M384.9 211.6V484.0" stroke="#868686" stroke-width="1.5"/>
<rect x="52.4" y="214.0" width="6.8" height="18.6" fill="#000"/>
<rect x="52.6" y="215.4" width="5.0" height="15.6" fill="url(#bg100)"/>
<path d="M45 211.6H52.4" stroke="#d0d0d0" stroke-width="1.3"/>
<text x="51.2" y="231.1" font-size="15.4" fill="#d6d6d6" text-anchor="end" textLength="28.0" lengthAdjust="spacingAndGlyphs">100</text>
<rect x="52.4" y="238.8" width="13.0" height="18.6" fill="#000"/>
<rect x="52.6" y="240.2" width="11.2" height="15.6" fill="url(#bg90)"/>
<path d="M45 236.4H52.4" stroke="#d0d0d0" stroke-width="1.3"/>
<text x="51.2" y="255.9" font-size="15.4" fill="#d6d6d6" text-anchor="end" textLength="18.7" lengthAdjust="spacingAndGlyphs">90</text>
<rect x="52.4" y="263.5" width="10.5" height="18.6" fill="#000"/>
<rect x="52.6" y="264.9" width="8.7" height="15.6" fill="url(#bg80)"/>
<path d="M45 261.1H52.4" stroke="#d0d0d0" stroke-width="1.3"/>
<text x="51.2" y="280.6" font-size="15.4" fill="#d6d6d6" text-anchor="end" textLength="18.7" lengthAdjust="spacingAndGlyphs">80</text>
<rect x="52.4" y="288.3" width="10.7" height="18.6" fill="#000"/>
<rect x="52.6" y="289.7" width="8.9" height="15.6" fill="url(#bg70)"/>
<path d="M45 285.9H52.4" stroke="#d0d0d0" stroke-width="1.3"/>
<text x="51.2" y="305.4" font-size="15.4" fill="#d6d6d6" text-anchor="end" textLength="18.7" lengthAdjust="spacingAndGlyphs">70</text>
<rect x="52.4" y="313.1" width="16.5" height="18.6" fill="#000"/>
<rect x="52.6" y="314.5" width="14.7" height="15.6" fill="url(#bg60)"/>
<path d="M45 310.7H52.4" stroke="#d0d0d0" stroke-width="1.3"/>
<text x="51.2" y="330.2" font-size="15.4" fill="#d6d6d6" text-anchor="end" textLength="18.7" lengthAdjust="spacingAndGlyphs">60</text>
<rect x="52.4" y="337.8" width="17.9" height="18.6" fill="#000"/>
<rect x="52.6" y="339.2" width="16.1" height="15.6" fill="url(#bg50)"/>
<path d="M45 335.4H52.4" stroke="#d0d0d0" stroke-width="1.3"/>
<text x="51.2" y="354.9" font-size="15.4" fill="#d6d6d6" text-anchor="end" textLength="18.7" lengthAdjust="spacingAndGlyphs">50</text>
<rect x="52.4" y="362.6" width="18.4" height="18.6" fill="#000"/>
<rect x="52.6" y="364.0" width="16.6" height="15.6" fill="url(#bg40)"/>
<path d="M45 360.2H52.4" stroke="#d0d0d0" stroke-width="1.3"/>
<text x="51.2" y="379.7" font-size="15.4" fill="#d6d6d6" text-anchor="end" textLength="18.7" lengthAdjust="spacingAndGlyphs">40</text>
<rect x="52.4" y="387.3" width="19.1" height="18.6" fill="#000"/>
<rect x="52.6" y="388.7" width="17.3" height="15.6" fill="url(#bg30)"/>
<path d="M45 384.9H52.4" stroke="#d0d0d0" stroke-width="1.3"/>
<text x="51.2" y="404.4" font-size="15.4" fill="#d6d6d6" text-anchor="end" textLength="18.7" lengthAdjust="spacingAndGlyphs">30</text>
<rect x="52.4" y="412.1" width="21.2" height="18.6" fill="#000"/>
<rect x="52.6" y="413.5" width="19.4" height="15.6" fill="url(#bg20)"/>
<path d="M45 409.7H52.4" stroke="#d0d0d0" stroke-width="1.3"/>
<text x="51.2" y="429.2" font-size="15.4" fill="#d6d6d6" text-anchor="end" textLength="18.7" lengthAdjust="spacingAndGlyphs">20</text>
<rect x="52.4" y="436.9" width="42.9" height="18.6" fill="#000"/>
<rect x="52.6" y="438.3" width="41.1" height="15.6" fill="url(#bg10)"/>
<path d="M45 434.5H52.4" stroke="#d0d0d0" stroke-width="1.3"/>
<text x="51.2" y="454.0" font-size="15.4" fill="#d6d6d6" text-anchor="end" textLength="18.7" lengthAdjust="spacingAndGlyphs">10</text>
<rect x="52.4" y="461.6" width="31.2" height="18.6" fill="#000"/>
<rect x="52.6" y="463.0" width="29.4" height="15.6" fill="url(#bg0)"/>
<path d="M45 459.2H52.4" stroke="#d0d0d0" stroke-width="1.3"/>
<text x="51.2" y="478.7" font-size="15.4" fill="#d6d6d6" text-anchor="end" textLength="9.3" lengthAdjust="spacingAndGlyphs">0</text>
<path d="M45 484.0H52.4" stroke="#d0d0d0" stroke-width="1.3"/>
<rect x="52.4" y="211.6" width="356.0" height="272.4" fill="none" stroke="#868686" stroke-width="1.6"/>
<path d="M52.4 484.0V491" stroke="#e0e0e0" stroke-width="1.6"/>
<text x="52.0" y="507.8" font-size="15.4" fill="#d6d6d6" text-anchor="middle" textLength="9.3" lengthAdjust="spacingAndGlyphs">0</text>
<path d="M99.9 484.0V491" stroke="#e0e0e0" stroke-width="1.6"/>
<text x="99.5" y="507.8" font-size="15.4" fill="#d6d6d6" text-anchor="middle" textLength="9.3" lengthAdjust="spacingAndGlyphs">2</text>
<path d="M147.4 484.0V491" stroke="#e0e0e0" stroke-width="1.6"/>
<text x="147.0" y="507.8" font-size="15.4" fill="#d6d6d6" text-anchor="middle" textLength="9.3" lengthAdjust="spacingAndGlyphs">4</text>
<path d="M194.9 484.0V491" stroke="#e0e0e0" stroke-width="1.6"/>
<text x="194.5" y="507.8" font-size="15.4" fill="#d6d6d6" text-anchor="middle" textLength="9.3" lengthAdjust="spacingAndGlyphs">6</text>
<path d="M242.4 484.0V491" stroke="#e0e0e0" stroke-width="1.6"/>
<text x="242.0" y="507.8" font-size="15.4" fill="#d6d6d6" text-anchor="middle" textLength="9.3" lengthAdjust="spacingAndGlyphs">8</text>
<path d="M289.9 484.0V491" stroke="#e0e0e0" stroke-width="1.6"/>
<text x="289.5" y="507.8" font-size="15.4" fill="#d6d6d6" text-anchor="middle" textLength="18.7" lengthAdjust="spacingAndGlyphs">10</text>
<path d="M337.4 484.0V491" stroke="#e0e0e0" stroke-width="1.6"/>
<text x="337.0" y="507.8" font-size="15.4" fill="#d6d6d6" text-anchor="middle" textLength="18.7" lengthAdjust="spacingAndGlyphs">12</text>
<path d="M384.9 484.0V491" stroke="#e0e0e0" stroke-width="1.6"/>
<text x="384.5" y="507.8" font-size="15.4" fill="#d6d6d6" text-anchor="middle" textLength="18.7" lengthAdjust="spacingAndGlyphs">14</text>
<text x="799.5" y="132.9" font-size="15" fill="#e4e4e4" text-anchor="middle" textLength="95" lengthAdjust="spacingAndGlyphs">RGB Balance</text>
<rect x="485.3" y="137.8" width="660.0" height="346.09999999999997" fill="#232323"/>
<path d="M485.3 173.3H1145.3" stroke="#868686" stroke-width="1.6"/>
<path d="M479.2 173.3H485.3" stroke="#d8d8d8" stroke-width="1.4"/>
<text x="478.7" y="179.6" font-size="15.4" fill="#d6d6d6" text-anchor="end" textLength="18.7" lengthAdjust="spacingAndGlyphs">40</text>
<path d="M485.3 243.0H1145.3" stroke="#868686" stroke-width="1.6"/>
<path d="M479.2 243.0H485.3" stroke="#d8d8d8" stroke-width="1.4"/>
<text x="478.7" y="249.3" font-size="15.4" fill="#d6d6d6" text-anchor="end" textLength="18.7" lengthAdjust="spacingAndGlyphs">20</text>
<path d="M485.3 313.0H1145.3" stroke="#868686" stroke-width="1.6"/>
<path d="M479.2 313.0H485.3" stroke="#d8d8d8" stroke-width="1.4"/>
<text x="478.7" y="319.3" font-size="15.4" fill="#d6d6d6" text-anchor="end" textLength="9.3" lengthAdjust="spacingAndGlyphs">0</text>
<path d="M485.3 381.1H1145.3" stroke="#868686" stroke-width="1.6"/>
<path d="M479.2 381.1H485.3" stroke="#d8d8d8" stroke-width="1.4"/>
<text x="478.7" y="387.4" font-size="15.4" fill="#d6d6d6" text-anchor="end" textLength="24.9" lengthAdjust="spacingAndGlyphs">-20</text>
<path d="M485.3 450.3H1145.3" stroke="#868686" stroke-width="1.6"/>
<path d="M479.2 450.3H485.3" stroke="#d8d8d8" stroke-width="1.4"/>
<text x="478.7" y="456.6" font-size="15.4" fill="#d6d6d6" text-anchor="end" textLength="24.9" lengthAdjust="spacingAndGlyphs">-40</text>
<clipPath id="rclip"><rect x="484.3" y="137.8" width="661.5" height="346.09999999999997"/></clipPath><g clip-path="url(#rclip)">
<polyline points="485.3,300.5 551.3,335.1 617.3,324.1 683.3,312.0 749.3,306.4 815.3,301.9 881.3,304.0 947.3,306.1 1013.3,306.1 1079.3,309.9 1145.3,310.9" fill="none" stroke="#008000" stroke-width="2.6" stroke-linejoin="round"/>
<polyline points="485.3,302.6 551.3,341.7 617.3,325.1 683.3,317.2 749.3,311.3 815.3,304.7 881.3,305.4 947.3,307.1 1013.3,307.5 1079.3,310.2 1145.3,308.5" fill="none" stroke="#ff0000" stroke-width="2.6" stroke-linejoin="round"/>
<polyline points="485.3,292.9 551.3,333.8 617.3,324.1 683.3,314.0 749.3,309.2 815.3,301.9 881.3,301.2 947.3,304.4 1013.3,304.7 1079.3,307.1 1145.3,310.2" fill="none" stroke="#0000ff" stroke-width="2.8" stroke-linejoin="round"/>
</g>
<rect x="485.3" y="137.8" width="660.0" height="346.09999999999997" fill="none" stroke="#868686" stroke-width="1.6"/>
<path d="M485.3 483.9V490.8" stroke="#e0e0e0" stroke-width="1.6"/>
<text x="484.9" y="507.8" font-size="15.4" fill="#d6d6d6" text-anchor="middle" textLength="9.3" lengthAdjust="spacingAndGlyphs">0</text>
<path d="M551.3 483.9V490.8" stroke="#e0e0e0" stroke-width="1.6"/>
<text x="550.9" y="507.8" font-size="15.4" fill="#d6d6d6" text-anchor="middle" textLength="18.7" lengthAdjust="spacingAndGlyphs">10</text>
<path d="M617.3 483.9V490.8" stroke="#e0e0e0" stroke-width="1.6"/>
<text x="616.9" y="507.8" font-size="15.4" fill="#d6d6d6" text-anchor="middle" textLength="18.7" lengthAdjust="spacingAndGlyphs">20</text>
<path d="M683.3 483.9V490.8" stroke="#e0e0e0" stroke-width="1.6"/>
<text x="682.9" y="507.8" font-size="15.4" fill="#d6d6d6" text-anchor="middle" textLength="18.7" lengthAdjust="spacingAndGlyphs">30</text>
<path d="M749.3 483.9V490.8" stroke="#e0e0e0" stroke-width="1.6"/>
<text x="748.9" y="507.8" font-size="15.4" fill="#d6d6d6" text-anchor="middle" textLength="18.7" lengthAdjust="spacingAndGlyphs">40</text>
<path d="M815.3 483.9V490.8" stroke="#e0e0e0" stroke-width="1.6"/>
<text x="814.9" y="507.8" font-size="15.4" fill="#d6d6d6" text-anchor="middle" textLength="18.7" lengthAdjust="spacingAndGlyphs">50</text>
<path d="M881.3 483.9V490.8" stroke="#e0e0e0" stroke-width="1.6"/>
<text x="880.9" y="507.8" font-size="15.4" fill="#d6d6d6" text-anchor="middle" textLength="18.7" lengthAdjust="spacingAndGlyphs">60</text>
<path d="M947.3 483.9V490.8" stroke="#e0e0e0" stroke-width="1.6"/>
<text x="946.9" y="507.8" font-size="15.4" fill="#d6d6d6" text-anchor="middle" textLength="18.7" lengthAdjust="spacingAndGlyphs">70</text>
<path d="M1013.3 483.9V490.8" stroke="#e0e0e0" stroke-width="1.6"/>
<text x="1012.9" y="507.8" font-size="15.4" fill="#d6d6d6" text-anchor="middle" textLength="18.7" lengthAdjust="spacingAndGlyphs">80</text>
<path d="M1079.3 483.9V490.8" stroke="#e0e0e0" stroke-width="1.6"/>
<text x="1078.9" y="507.8" font-size="15.4" fill="#d6d6d6" text-anchor="middle" textLength="18.7" lengthAdjust="spacingAndGlyphs">90</text>
<path d="M1145.3 483.9V490.8" stroke="#e0e0e0" stroke-width="1.6"/>
<text x="1144.9" y="507.8" font-size="15.4" fill="#d6d6d6" text-anchor="middle" textLength="28.0" lengthAdjust="spacingAndGlyphs">100</text>
<text x="1535.5" y="132.9" font-size="15" fill="#e4e4e4" text-anchor="middle" textLength="125" lengthAdjust="spacingAndGlyphs">Gamma Log/Log</text>
<rect x="1220.0" y="138.0" width="660.2" height="346.0" fill="#232323"/>
<path d="M1220.0 178.6H1880.2" stroke="#868686" stroke-width="1.6"/>
<path d="M1212.6 178.6H1220.0" stroke="#d8d8d8" stroke-width="1.4"/>
<text x="1212.2" y="184.8" font-size="15.4" fill="#d6d6d6" text-anchor="end" textLength="23.0" lengthAdjust="spacingAndGlyphs">2,4</text>
<path d="M1220.0 221.7H1880.2" stroke="#868686" stroke-width="1.6"/>
<path d="M1212.6 221.7H1220.0" stroke="#d8d8d8" stroke-width="1.4"/>
<text x="1212.2" y="227.9" font-size="15.4" fill="#d6d6d6" text-anchor="end" textLength="23.0" lengthAdjust="spacingAndGlyphs">2,2</text>
<path d="M1220.0 264.8H1880.2" stroke="#868686" stroke-width="1.6"/>
<path d="M1212.6 264.8H1220.0" stroke="#d8d8d8" stroke-width="1.4"/>
<text x="1212.2" y="271.0" font-size="15.4" fill="#d6d6d6" text-anchor="end" textLength="9.3" lengthAdjust="spacingAndGlyphs">2</text>
<path d="M1220.0 307.9H1880.2" stroke="#868686" stroke-width="1.6"/>
<path d="M1212.6 307.9H1220.0" stroke="#d8d8d8" stroke-width="1.4"/>
<text x="1212.2" y="314.1" font-size="15.4" fill="#d6d6d6" text-anchor="end" textLength="23.0" lengthAdjust="spacingAndGlyphs">1,8</text>
<path d="M1220.0 351.0H1880.2" stroke="#868686" stroke-width="1.6"/>
<path d="M1212.6 351.0H1220.0" stroke="#d8d8d8" stroke-width="1.4"/>
<text x="1212.2" y="357.2" font-size="15.4" fill="#d6d6d6" text-anchor="end" textLength="23.0" lengthAdjust="spacingAndGlyphs">1,6</text>
<path d="M1220.0 394.1H1880.2" stroke="#868686" stroke-width="1.6"/>
<path d="M1212.6 394.1H1220.0" stroke="#d8d8d8" stroke-width="1.4"/>
<text x="1212.2" y="400.3" font-size="15.4" fill="#d6d6d6" text-anchor="end" textLength="23.0" lengthAdjust="spacingAndGlyphs">1,4</text>
<path d="M1220.0 437.2H1880.2" stroke="#868686" stroke-width="1.6"/>
<path d="M1212.6 437.2H1220.0" stroke="#d8d8d8" stroke-width="1.4"/>
<text x="1212.2" y="443.4" font-size="15.4" fill="#d6d6d6" text-anchor="end" textLength="23.0" lengthAdjust="spacingAndGlyphs">1,2</text>
<path d="M1220.0 480.3H1880.2" stroke="#868686" stroke-width="1.6"/>
<path d="M1212.6 480.3H1220.0" stroke="#d8d8d8" stroke-width="1.4"/>
<text x="1212.2" y="486.5" font-size="15.4" fill="#d6d6d6" text-anchor="end" textLength="9.3" lengthAdjust="spacingAndGlyphs">1</text>
<clipPath id="gclip"><rect x="1218.5" y="138.0" width="661.2" height="346.0"/></clipPath><g clip-path="url(#gclip)">
<polyline points="1220.0,417.8 1286.0,231.4 1352.0,221.7 1418.1,222.8 1484.1,221.7 1550.1,223.9 1616.1,219.5 1682.1,218.5 1748.2,220.6 1814.2,203.8 1880.2,202.3" fill="none" stroke="#8c8c8c" stroke-width="2.6" stroke-linejoin="round"/>
<polyline points="1220.0,417.8 1226.6,354.2 1233.2,334.8 1239.8,319.8 1250.4,301.4 1259.6,289.6 1266.2,282.0 1272.8,275.6 1279.4,270.8 1286.0,265.9 1299.2,258.3 1312.4,251.9 1332.2,244.3 1358.6,236.8 1391.7,230.3 1418.1,226.4 1451.1,222.8 1484.1,219.5 1550.1,214.8 1616.1,211.6 1682.1,208.8 1748.2,206.6 1814.2,204.5 1880.2,202.3" fill="none" stroke="#ffff00" stroke-width="3.2" stroke-linejoin="round"/>
</g>
<rect x="1220.0" y="138.0" width="660.2" height="346.0" fill="none" stroke="#868686" stroke-width="1.6"/>
<path d="M1220.0 484.0V490.8" stroke="#e0e0e0" stroke-width="1.6"/>
<text x="1219.6" y="507.8" font-size="15.4" fill="#d6d6d6" text-anchor="middle" textLength="9.3" lengthAdjust="spacingAndGlyphs">0</text>
<path d="M1286.0 484.0V490.8" stroke="#e0e0e0" stroke-width="1.6"/>
<text x="1285.6" y="507.8" font-size="15.4" fill="#d6d6d6" text-anchor="middle" textLength="18.7" lengthAdjust="spacingAndGlyphs">10</text>
<path d="M1352.0 484.0V490.8" stroke="#e0e0e0" stroke-width="1.6"/>
<text x="1351.6" y="507.8" font-size="15.4" fill="#d6d6d6" text-anchor="middle" textLength="18.7" lengthAdjust="spacingAndGlyphs">20</text>
<path d="M1418.1 484.0V490.8" stroke="#e0e0e0" stroke-width="1.6"/>
<text x="1417.7" y="507.8" font-size="15.4" fill="#d6d6d6" text-anchor="middle" textLength="18.7" lengthAdjust="spacingAndGlyphs">30</text>
<path d="M1484.1 484.0V490.8" stroke="#e0e0e0" stroke-width="1.6"/>
<text x="1483.7" y="507.8" font-size="15.4" fill="#d6d6d6" text-anchor="middle" textLength="18.7" lengthAdjust="spacingAndGlyphs">40</text>
<path d="M1550.1 484.0V490.8" stroke="#e0e0e0" stroke-width="1.6"/>
<text x="1549.7" y="507.8" font-size="15.4" fill="#d6d6d6" text-anchor="middle" textLength="18.7" lengthAdjust="spacingAndGlyphs">50</text>
<path d="M1616.1 484.0V490.8" stroke="#e0e0e0" stroke-width="1.6"/>
<text x="1615.7" y="507.8" font-size="15.4" fill="#d6d6d6" text-anchor="middle" textLength="18.7" lengthAdjust="spacingAndGlyphs">60</text>
<path d="M1682.1 484.0V490.8" stroke="#e0e0e0" stroke-width="1.6"/>
<text x="1681.7" y="507.8" font-size="15.4" fill="#d6d6d6" text-anchor="middle" textLength="18.7" lengthAdjust="spacingAndGlyphs">70</text>
<path d="M1748.2 484.0V490.8" stroke="#e0e0e0" stroke-width="1.6"/>
<text x="1747.8" y="507.8" font-size="15.4" fill="#d6d6d6" text-anchor="middle" textLength="18.7" lengthAdjust="spacingAndGlyphs">80</text>
<path d="M1814.2 484.0V490.8" stroke="#e0e0e0" stroke-width="1.6"/>
<text x="1813.8" y="507.8" font-size="15.4" fill="#d6d6d6" text-anchor="middle" textLength="18.7" lengthAdjust="spacingAndGlyphs">90</text>
<path d="M1880.2 484.0V490.8" stroke="#e0e0e0" stroke-width="1.6"/>
<text x="1879.8" y="507.8" font-size="15.4" fill="#d6d6d6" text-anchor="middle" textLength="28.0" lengthAdjust="spacingAndGlyphs">100</text>
<text x="99.5" y="552.6" font-size="32.6" fill="#f2f2f2" textLength="249" lengthAdjust="spacingAndGlyphs">Avg dE2000: 0,8</text>
<text x="572.5" y="552.6" font-size="32.6" fill="#f2f2f2" textLength="218.5" lengthAdjust="spacingAndGlyphs">Avg CCT: 6577</text>
<text x="1013.5" y="552.6" font-size="32.6" fill="#f2f2f2" textLength="297.5" lengthAdjust="spacingAndGlyphs">Contrast Ratio: 875</text>
<text x="1498.5" y="552.6" font-size="32.6" fill="#f2f2f2" textLength="292.5" lengthAdjust="spacingAndGlyphs">Total Gamma: 2,19</text>
<text x="363.5" y="707.6" font-size="13" fill="#fff" text-anchor="middle" textLength="7.4" lengthAdjust="spacingAndGlyphs" stroke="#fff" stroke-width="0.3">0</text>
<text x="495.8" y="707.6" font-size="13" fill="#fff" text-anchor="middle" textLength="14.8" lengthAdjust="spacingAndGlyphs" stroke="#fff" stroke-width="0.3">10</text>
<text x="628.2" y="707.6" font-size="13" fill="#fff" text-anchor="middle" textLength="14.8" lengthAdjust="spacingAndGlyphs" stroke="#fff" stroke-width="0.3">20</text>
<text x="760.5" y="707.6" font-size="13" fill="#fff" text-anchor="middle" textLength="14.8" lengthAdjust="spacingAndGlyphs" stroke="#fff" stroke-width="0.3">30</text>
<text x="892.8" y="707.6" font-size="13" fill="#fff" text-anchor="middle" textLength="14.8" lengthAdjust="spacingAndGlyphs" stroke="#fff" stroke-width="0.3">40</text>
<text x="1025.2" y="707.6" font-size="13" fill="#fff" text-anchor="middle" textLength="14.8" lengthAdjust="spacingAndGlyphs" stroke="#fff" stroke-width="0.3">50</text>
<text x="1157.5" y="707.6" font-size="13" fill="#fff" text-anchor="middle" textLength="14.8" lengthAdjust="spacingAndGlyphs" stroke="#fff" stroke-width="0.3">60</text>
<text x="1289.8" y="707.6" font-size="13" fill="#fff" text-anchor="middle" textLength="14.8" lengthAdjust="spacingAndGlyphs" stroke="#fff" stroke-width="0.3">70</text>
<text x="1422.1" y="707.6" font-size="13" fill="#fff" text-anchor="middle" textLength="14.8" lengthAdjust="spacingAndGlyphs" stroke="#fff" stroke-width="0.3">80</text>
<text x="1554.5" y="707.6" font-size="13" fill="#fff" text-anchor="middle" textLength="14.8" lengthAdjust="spacingAndGlyphs" stroke="#fff" stroke-width="0.3">90</text>
<text x="1686.8" y="707.6" font-size="13" fill="#fff" text-anchor="middle" textLength="22.2" lengthAdjust="spacingAndGlyphs" stroke="#fff" stroke-width="0.3">100</text>
<text transform="translate(297,625.5) rotate(-90)" font-size="13" fill="#fff" stroke="#fff" stroke-width="0.3" textLength="38" lengthAdjust="spacingAndGlyphs">Actual</text>
<text transform="translate(297,687.5) rotate(-90)" font-size="13" fill="#fff" stroke="#fff" stroke-width="0.3" textLength="38.5" lengthAdjust="spacingAndGlyphs">Target</text>
<text x="17" y="775.4" font-size="31.6" fill="#f2f2f2" textLength="252" lengthAdjust="spacingAndGlyphs">Current Reading</text>
<text x="17" y="821.5" font-size="27" fill="#f2f2f2" textLength="118" lengthAdjust="spacingAndGlyphs">x: 0,3129</text>
<text x="17" y="866" font-size="27" fill="#f2f2f2" textLength="119" lengthAdjust="spacingAndGlyphs">y: 0,3288</text>
<text x="17" y="910.5" font-size="27" fill="#f2f2f2" textLength="95" lengthAdjust="spacingAndGlyphs">fL: 99,4</text>
<text x="17" y="954.2" font-size="27" fill="#f2f2f2" textLength="81.5" lengthAdjust="spacingAndGlyphs">cd/m²:</text>
<text x="112.4" y="954.2" font-size="27" fill="#f2f2f2" textLength="87.6" lengthAdjust="spacingAndGlyphs">340,58</text>
<rect x="427.7" y="751.50" width="274.3" height="4.00" fill="url(#cg0)" shape-rendering="crispEdges"/>
<rect x="427.7" y="755.48" width="274.3" height="4.00" fill="url(#cg1)" shape-rendering="crispEdges"/>
<rect x="427.7" y="759.47" width="274.3" height="4.00" fill="url(#cg2)" shape-rendering="crispEdges"/>
<rect x="427.7" y="763.45" width="274.3" height="4.00" fill="url(#cg3)" shape-rendering="crispEdges"/>
<rect x="427.7" y="767.43" width="274.3" height="4.00" fill="url(#cg4)" shape-rendering="crispEdges"/>
<rect x="427.7" y="771.41" width="274.3" height="4.00" fill="url(#cg5)" shape-rendering="crispEdges"/>
<rect x="427.7" y="775.40" width="274.3" height="4.00" fill="url(#cg6)" shape-rendering="crispEdges"/>
<rect x="427.7" y="779.38" width="274.3" height="4.00" fill="url(#cg7)" shape-rendering="crispEdges"/>
<rect x="427.7" y="783.36" width="274.3" height="4.00" fill="url(#cg8)" shape-rendering="crispEdges"/>
<rect x="427.7" y="787.35" width="274.3" height="4.00" fill="url(#cg9)" shape-rendering="crispEdges"/>
<rect x="427.7" y="791.33" width="274.3" height="4.00" fill="url(#cg10)" shape-rendering="crispEdges"/>
<rect x="427.7" y="795.31" width="274.3" height="4.00" fill="url(#cg11)" shape-rendering="crispEdges"/>
<rect x="427.7" y="799.30" width="274.3" height="4.00" fill="url(#cg12)" shape-rendering="crispEdges"/>
<rect x="427.7" y="803.28" width="274.3" height="4.00" fill="url(#cg13)" shape-rendering="crispEdges"/>
<rect x="427.7" y="807.26" width="274.3" height="4.00" fill="url(#cg14)" shape-rendering="crispEdges"/>
<rect x="427.7" y="811.24" width="274.3" height="4.00" fill="url(#cg15)" shape-rendering="crispEdges"/>
<rect x="427.7" y="815.23" width="274.3" height="4.00" fill="url(#cg16)" shape-rendering="crispEdges"/>
<rect x="427.7" y="819.21" width="274.3" height="4.00" fill="url(#cg17)" shape-rendering="crispEdges"/>
<rect x="427.7" y="823.19" width="274.3" height="4.00" fill="url(#cg18)" shape-rendering="crispEdges"/>
<rect x="427.7" y="827.18" width="274.3" height="4.00" fill="url(#cg19)" shape-rendering="crispEdges"/>
<rect x="427.7" y="831.16" width="274.3" height="4.00" fill="url(#cg20)" shape-rendering="crispEdges"/>
<rect x="427.7" y="835.14" width="274.3" height="4.00" fill="url(#cg21)" shape-rendering="crispEdges"/>
<rect x="427.7" y="839.13" width="274.3" height="4.00" fill="url(#cg22)" shape-rendering="crispEdges"/>
<rect x="427.7" y="843.11" width="274.3" height="4.00" fill="url(#cg23)" shape-rendering="crispEdges"/>
<rect x="427.7" y="847.09" width="274.3" height="4.00" fill="url(#cg24)" shape-rendering="crispEdges"/>
<rect x="427.7" y="851.07" width="274.3" height="4.00" fill="url(#cg25)" shape-rendering="crispEdges"/>
<rect x="427.7" y="855.06" width="274.3" height="4.00" fill="url(#cg26)" shape-rendering="crispEdges"/>
<rect x="427.7" y="859.04" width="274.3" height="4.00" fill="url(#cg27)" shape-rendering="crispEdges"/>
<rect x="427.7" y="863.02" width="274.3" height="4.00" fill="url(#cg28)" shape-rendering="crispEdges"/>
<rect x="427.7" y="867.01" width="274.3" height="4.00" fill="url(#cg29)" shape-rendering="crispEdges"/>
<rect x="427.7" y="870.99" width="274.3" height="4.00" fill="url(#cg30)" shape-rendering="crispEdges"/>
<rect x="427.7" y="874.97" width="274.3" height="4.00" fill="url(#cg31)" shape-rendering="crispEdges"/>
<rect x="427.7" y="878.96" width="274.3" height="4.00" fill="url(#cg32)" shape-rendering="crispEdges"/>
<rect x="427.7" y="882.94" width="274.3" height="4.00" fill="url(#cg33)" shape-rendering="crispEdges"/>
<rect x="427.7" y="886.92" width="274.3" height="4.00" fill="url(#cg34)" shape-rendering="crispEdges"/>
<rect x="427.7" y="890.90" width="274.3" height="4.00" fill="url(#cg35)" shape-rendering="crispEdges"/>
<rect x="427.7" y="894.89" width="274.3" height="4.00" fill="url(#cg36)" shape-rendering="crispEdges"/>
<rect x="427.7" y="898.87" width="274.3" height="4.00" fill="url(#cg37)" shape-rendering="crispEdges"/>
<rect x="427.7" y="902.85" width="274.3" height="4.00" fill="url(#cg38)" shape-rendering="crispEdges"/>
<rect x="427.7" y="906.84" width="274.3" height="4.00" fill="url(#cg39)" shape-rendering="crispEdges"/>
<rect x="427.7" y="910.82" width="274.3" height="4.00" fill="url(#cg40)" shape-rendering="crispEdges"/>
<rect x="427.7" y="914.80" width="274.3" height="4.00" fill="url(#cg41)" shape-rendering="crispEdges"/>
<rect x="427.7" y="918.79" width="274.3" height="4.00" fill="url(#cg42)" shape-rendering="crispEdges"/>
<rect x="427.7" y="922.77" width="274.3" height="4.00" fill="url(#cg43)" shape-rendering="crispEdges"/>
<rect x="427.7" y="926.75" width="274.3" height="4.00" fill="url(#cg44)" shape-rendering="crispEdges"/>
<rect x="427.7" y="930.73" width="274.3" height="4.00" fill="url(#cg45)" shape-rendering="crispEdges"/>
<rect x="427.7" y="934.72" width="274.3" height="4.00" fill="url(#cg46)" shape-rendering="crispEdges"/>
<clipPath id="cclip"><rect x="427.7" y="751.5" width="274.3" height="187.20000000000005"/></clipPath><g clip-path="url(#cclip)">
<polyline points="808.2,725.9 790.2,735.1 773.0,744.0 756.5,752.7 740.7,761.3 725.6,769.6 711.2,777.7 697.3,785.6 684.0,793.3 671.2,800.8 659.0,808.1 647.2,815.3 635.9,822.2 625.0,829.0 614.6,835.6 604.5,842.0 594.8,848.2 585.5,854.3 576.5,860.2 567.8,866.0 559.4,871.6 551.3,877.1 543.5,882.4 536.0,887.6 528.7,892.6 521.6,897.6 514.8,902.4 508.2,907.0 501.9,911.6 495.7,916.1 489.7,920.4 483.9,924.6 478.3,928.7 472.8,932.8 467.5,936.7 462.4,940.5 457.4,944.3 452.6,947.9 447.9,951.5 443.3,954.9 438.8,958.3 434.5,961.7 430.3,964.9 426.2,968.1 422.3,971.2 418.4,974.2 414.6,977.1 410.9,980.0 407.4,982.9" fill="none" stroke="#000" stroke-width="3.3"/>
</g>
<rect x="427.7" y="751.5" width="274.3" height="187.20000000000005" fill="none" stroke="#9a9a9a" stroke-width="1.4"/>
<circle cx="520.5" cy="848.3" r="5.4" fill="#1a1a1a"/>
<rect x="557.2" y="838" width="14.8" height="14.8" fill="none" stroke="#000" stroke-width="2"/>
<circle cx="555.6" cy="841.0" r="4.8" fill="#4d4d4d" stroke="#111" stroke-width="0.9"/>
<circle cx="562.4" cy="839.2" r="4.8" fill="#666" stroke="#111" stroke-width="0.9"/>
<circle cx="558.4" cy="850.6" r="4.8" fill="#999" stroke="#111" stroke-width="0.9"/>
<circle cx="559.4" cy="849.4" r="4.8" fill="#b3b3b3" stroke="#111" stroke-width="0.9"/>
<circle cx="560.2" cy="847.6" r="4.8" fill="#e6e6e6" stroke="#111" stroke-width="0.9"/>
<circle cx="565.6" cy="845.9" r="4.8" fill="#fff" stroke="#111" stroke-width="0.9"/>
<path d="M421.5 767.2H427.7" stroke="#e0e0e0" stroke-width="1.4"/>
<text x="420.6" y="773.4" font-size="15.4" fill="#d6d6d6" text-anchor="end" textLength="32.4" lengthAdjust="spacingAndGlyphs">0,35</text>
<path d="M421.5 804.7H427.7" stroke="#e0e0e0" stroke-width="1.4"/>
<text x="420.6" y="810.9" font-size="15.4" fill="#d6d6d6" text-anchor="end" textLength="32.4" lengthAdjust="spacingAndGlyphs">0,34</text>
<path d="M421.5 842.2H427.7" stroke="#e0e0e0" stroke-width="1.4"/>
<text x="420.6" y="848.4" font-size="15.4" fill="#d6d6d6" text-anchor="end" textLength="32.4" lengthAdjust="spacingAndGlyphs">0,33</text>
<path d="M421.5 879.7H427.7" stroke="#e0e0e0" stroke-width="1.4"/>
<text x="420.6" y="885.9" font-size="15.4" fill="#d6d6d6" text-anchor="end" textLength="32.4" lengthAdjust="spacingAndGlyphs">0,32</text>
<path d="M421.5 917.2H427.7" stroke="#e0e0e0" stroke-width="1.4"/>
<text x="420.6" y="923.4" font-size="15.4" fill="#d6d6d6" text-anchor="end" textLength="32.4" lengthAdjust="spacingAndGlyphs">0,31</text>
<path d="M438.8 938.7V945.5" stroke="#e0e0e0" stroke-width="1.6"/>
<text x="438.8" y="963.2" font-size="15.4" fill="#d6d6d6" text-anchor="middle" textLength="32.4" lengthAdjust="spacingAndGlyphs">0,29</text>
<path d="M493.7 938.7V945.5" stroke="#e0e0e0" stroke-width="1.6"/>
<text x="493.7" y="963.2" font-size="15.4" fill="#d6d6d6" text-anchor="middle" textLength="23.0" lengthAdjust="spacingAndGlyphs">0,3</text>
<path d="M548.6 938.7V945.5" stroke="#e0e0e0" stroke-width="1.6"/>
<text x="548.6" y="963.2" font-size="15.4" fill="#d6d6d6" text-anchor="middle" textLength="32.4" lengthAdjust="spacingAndGlyphs">0,31</text>
<path d="M603.5 938.7V945.5" stroke="#e0e0e0" stroke-width="1.6"/>
<text x="603.5" y="963.2" font-size="15.4" fill="#d6d6d6" text-anchor="middle" textLength="32.4" lengthAdjust="spacingAndGlyphs">0,32</text>
<path d="M658.4 938.7V945.5" stroke="#e0e0e0" stroke-width="1.6"/>
<text x="658.4" y="963.2" font-size="15.4" fill="#d6d6d6" text-anchor="middle" textLength="32.4" lengthAdjust="spacingAndGlyphs">0,33</text>
<text x="893.0" y="749.5" font-size="16" fill="#fff" textLength="9.4" lengthAdjust="spacingAndGlyphs">0</text>
<text x="979.0" y="749.5" font-size="16" fill="#fff" textLength="18.8" lengthAdjust="spacingAndGlyphs">10</text>
<text x="1054.8" y="749.5" font-size="16" fill="#fff" textLength="18.8" lengthAdjust="spacingAndGlyphs">20</text>
<text x="1130.5" y="749.5" font-size="16" fill="#fff" textLength="18.8" lengthAdjust="spacingAndGlyphs">30</text>
<text x="1206.5" y="749.5" font-size="16" fill="#fff" textLength="18.8" lengthAdjust="spacingAndGlyphs">40</text>
<text x="1282.4" y="749.5" font-size="16" fill="#fff" textLength="18.8" lengthAdjust="spacingAndGlyphs">50</text>
<text x="1358.0" y="749.5" font-size="16" fill="#fff" textLength="18.8" lengthAdjust="spacingAndGlyphs">60</text>
<text x="1433.8" y="749.5" font-size="16" fill="#fff" textLength="18.8" lengthAdjust="spacingAndGlyphs">70</text>
<text x="1509.5" y="749.5" font-size="16" fill="#fff" textLength="18.8" lengthAdjust="spacingAndGlyphs">80</text>
<text x="1585.5" y="749.5" font-size="16" fill="#fff" textLength="18.8" lengthAdjust="spacingAndGlyphs">90</text>
<text x="1661.2" y="749.5" font-size="16" fill="#fff" textLength="28.2" lengthAdjust="spacingAndGlyphs">100</text>
<text x="743.2" y="778.8" font-size="18" fill="#f4f4f4" textLength="63.5" lengthAdjust="spacingAndGlyphs">x: CIE31</text>
<text x="893.0" y="778.8" font-size="18" fill="#f4f4f4" textLength="34.0" lengthAdjust="spacingAndGlyphs">0,27</text>
<text x="979.0" y="778.8" font-size="18" fill="#f4f4f4" textLength="34.0" lengthAdjust="spacingAndGlyphs">0,30</text>
<text x="1054.8" y="778.8" font-size="18" fill="#f4f4f4" textLength="34.0" lengthAdjust="spacingAndGlyphs">0,31</text>
<text x="1130.5" y="778.8" font-size="18" fill="#f4f4f4" textLength="34.0" lengthAdjust="spacingAndGlyphs">0,31</text>
<text x="1206.5" y="778.8" font-size="18" fill="#f4f4f4" textLength="34.0" lengthAdjust="spacingAndGlyphs">0,31</text>
<text x="1282.4" y="778.8" font-size="18" fill="#f4f4f4" textLength="34.0" lengthAdjust="spacingAndGlyphs">0,31</text>
<text x="1358.0" y="778.8" font-size="18" fill="#f4f4f4" textLength="34.0" lengthAdjust="spacingAndGlyphs">0,31</text>
<text x="1433.8" y="778.8" font-size="18" fill="#f4f4f4" textLength="34.0" lengthAdjust="spacingAndGlyphs">0,31</text>
<text x="1509.5" y="778.8" font-size="18" fill="#f4f4f4" textLength="34.0" lengthAdjust="spacingAndGlyphs">0,31</text>
<text x="1585.5" y="778.8" font-size="18" fill="#f4f4f4" textLength="34.0" lengthAdjust="spacingAndGlyphs">0,31</text>
<text x="1661.2" y="778.8" font-size="18" fill="#f4f4f4" textLength="34.0" lengthAdjust="spacingAndGlyphs">0,31</text>
<text x="743.2" y="806.7" font-size="18" fill="#f0f0f0" textLength="63.5" lengthAdjust="spacingAndGlyphs">y: CIE31</text>
<text x="893.0" y="806.7" font-size="18" fill="#f0f0f0" textLength="34.0" lengthAdjust="spacingAndGlyphs">0,26</text>
<text x="979.0" y="806.7" font-size="18" fill="#f0f0f0" textLength="34.0" lengthAdjust="spacingAndGlyphs">0,33</text>
<text x="1054.8" y="806.7" font-size="18" fill="#f0f0f0" textLength="34.0" lengthAdjust="spacingAndGlyphs">0,33</text>
<text x="1130.5" y="806.7" font-size="18" fill="#f0f0f0" textLength="34.0" lengthAdjust="spacingAndGlyphs">0,33</text>
<text x="1206.5" y="806.7" font-size="18" fill="#f0f0f0" textLength="34.0" lengthAdjust="spacingAndGlyphs">0,33</text>
<text x="1282.4" y="806.7" font-size="18" fill="#f0f0f0" textLength="34.0" lengthAdjust="spacingAndGlyphs">0,33</text>
<text x="1358.0" y="806.7" font-size="18" fill="#f0f0f0" textLength="34.0" lengthAdjust="spacingAndGlyphs">0,33</text>
<text x="1433.8" y="806.7" font-size="18" fill="#f0f0f0" textLength="34.0" lengthAdjust="spacingAndGlyphs">0,33</text>
<text x="1509.5" y="806.7" font-size="18" fill="#f0f0f0" textLength="34.0" lengthAdjust="spacingAndGlyphs">0,33</text>
<text x="1585.5" y="806.7" font-size="18" fill="#f0f0f0" textLength="34.0" lengthAdjust="spacingAndGlyphs">0,33</text>
<text x="1661.2" y="806.7" font-size="18" fill="#f0f0f0" textLength="34.0" lengthAdjust="spacingAndGlyphs">0,33</text>
<text x="743.2" y="834.7" font-size="18" fill="#f4f4f4" textLength="10" lengthAdjust="spacingAndGlyphs">Y</text>
<text x="893.0" y="834.7" font-size="18" fill="#f4f4f4" textLength="34.0" lengthAdjust="spacingAndGlyphs">0,39</text>
<text x="979.0" y="834.7" font-size="18" fill="#f4f4f4" textLength="34.0" lengthAdjust="spacingAndGlyphs">2,56</text>
<text x="1054.8" y="834.7" font-size="18" fill="#f4f4f4" textLength="44.0" lengthAdjust="spacingAndGlyphs">10,13</text>
<text x="1130.5" y="834.7" font-size="18" fill="#f4f4f4" textLength="44.0" lengthAdjust="spacingAndGlyphs">24,25</text>
<text x="1206.5" y="834.7" font-size="18" fill="#f4f4f4" textLength="44.0" lengthAdjust="spacingAndGlyphs">45,88</text>
<text x="1282.4" y="834.7" font-size="18" fill="#f4f4f4" textLength="44.0" lengthAdjust="spacingAndGlyphs">75,92</text>
<text x="1358.0" y="834.7" font-size="18" fill="#f4f4f4" textLength="54.0" lengthAdjust="spacingAndGlyphs">110,82</text>
<text x="1433.8" y="834.7" font-size="18" fill="#f4f4f4" textLength="54.0" lengthAdjust="spacingAndGlyphs">154,17</text>
<text x="1509.5" y="834.7" font-size="18" fill="#f4f4f4" textLength="54.0" lengthAdjust="spacingAndGlyphs">208,70</text>
<text x="1585.5" y="834.7" font-size="18" fill="#f4f4f4" textLength="54.0" lengthAdjust="spacingAndGlyphs">269,39</text>
<text x="1661.2" y="834.7" font-size="18" fill="#f4f4f4" textLength="54.0" lengthAdjust="spacingAndGlyphs">340,58</text>
<text x="743.2" y="862.7" font-size="18" fill="#f0f0f0" textLength="66.5" lengthAdjust="spacingAndGlyphs">Target Y</text>
<text x="893.0" y="862.7" font-size="18" fill="#f0f0f0" textLength="34.0" lengthAdjust="spacingAndGlyphs">0,00</text>
<text x="979.0" y="862.7" font-size="18" fill="#f0f0f0" textLength="34.0" lengthAdjust="spacingAndGlyphs">3,52</text>
<text x="1054.8" y="862.7" font-size="18" fill="#f0f0f0" textLength="44.0" lengthAdjust="spacingAndGlyphs">11,27</text>
<text x="1130.5" y="862.7" font-size="18" fill="#f0f0f0" textLength="44.0" lengthAdjust="spacingAndGlyphs">24,61</text>
<text x="1206.5" y="862.7" font-size="18" fill="#f0f0f0" textLength="44.0" lengthAdjust="spacingAndGlyphs">45,25</text>
<text x="1282.4" y="862.7" font-size="18" fill="#f0f0f0" textLength="44.0" lengthAdjust="spacingAndGlyphs">73,52</text>
<text x="1358.0" y="862.7" font-size="18" fill="#f0f0f0" textLength="54.0" lengthAdjust="spacingAndGlyphs">108,49</text>
<text x="1433.8" y="862.7" font-size="18" fill="#f0f0f0" textLength="54.0" lengthAdjust="spacingAndGlyphs">151,63</text>
<text x="1509.5" y="862.7" font-size="18" fill="#f0f0f0" textLength="54.0" lengthAdjust="spacingAndGlyphs">205,65</text>
<text x="1585.5" y="862.7" font-size="18" fill="#f0f0f0" textLength="54.0" lengthAdjust="spacingAndGlyphs">269,50</text>
<text x="1661.2" y="862.7" font-size="18" fill="#f0f0f0" textLength="54.0" lengthAdjust="spacingAndGlyphs">340,58</text>
<text x="743.2" y="890.8" font-size="18" fill="#f4f4f4" textLength="138.5" lengthAdjust="spacingAndGlyphs">Gamma Log/Log</text>
<text x="893.0" y="890.8" font-size="18" fill="#f4f4f4" textLength="34.0" lengthAdjust="spacingAndGlyphs">1,28</text>
<text x="979.0" y="890.8" font-size="18" fill="#f4f4f4" textLength="34.0" lengthAdjust="spacingAndGlyphs">2,14</text>
<text x="1054.8" y="890.8" font-size="18" fill="#f4f4f4" textLength="34.0" lengthAdjust="spacingAndGlyphs">2,18</text>
<text x="1130.5" y="890.8" font-size="18" fill="#f4f4f4" textLength="34.0" lengthAdjust="spacingAndGlyphs">2,18</text>
<text x="1206.5" y="890.8" font-size="18" fill="#f4f4f4" textLength="34.0" lengthAdjust="spacingAndGlyphs">2,19</text>
<text x="1282.4" y="890.8" font-size="18" fill="#f4f4f4" textLength="34.0" lengthAdjust="spacingAndGlyphs">2,18</text>
<text x="1358.0" y="890.8" font-size="18" fill="#f4f4f4" textLength="34.0" lengthAdjust="spacingAndGlyphs">2,20</text>
<text x="1433.8" y="890.8" font-size="18" fill="#f4f4f4" textLength="34.0" lengthAdjust="spacingAndGlyphs">2,20</text>
<text x="1509.5" y="890.8" font-size="18" fill="#f4f4f4" textLength="34.0" lengthAdjust="spacingAndGlyphs">2,19</text>
<text x="1585.5" y="890.8" font-size="18" fill="#f4f4f4" textLength="34.0" lengthAdjust="spacingAndGlyphs">2,27</text>
<text x="1661.2" y="890.8" font-size="18" fill="#f4f4f4" textLength="34.0" lengthAdjust="spacingAndGlyphs">2,27</text>
<text x="743.2" y="918.7" font-size="18" fill="#f0f0f0" textLength="32" lengthAdjust="spacingAndGlyphs">CCT</text>
<text x="893.0" y="918.7" font-size="18" fill="#f0f0f0" textLength="74.0" lengthAdjust="spacingAndGlyphs">14161,00</text>
<text x="979.0" y="918.7" font-size="18" fill="#f0f0f0" textLength="64.0" lengthAdjust="spacingAndGlyphs">6959,00</text>
<text x="1054.8" y="918.7" font-size="18" fill="#f0f0f0" textLength="64.0" lengthAdjust="spacingAndGlyphs">6536,00</text>
<text x="1130.5" y="918.7" font-size="18" fill="#f0f0f0" textLength="64.0" lengthAdjust="spacingAndGlyphs">6568,00</text>
<text x="1206.5" y="918.7" font-size="18" fill="#f0f0f0" textLength="64.0" lengthAdjust="spacingAndGlyphs">6508,00</text>
<text x="1282.4" y="918.7" font-size="18" fill="#f0f0f0" textLength="64.0" lengthAdjust="spacingAndGlyphs">6537,00</text>
<text x="1358.0" y="918.7" font-size="18" fill="#f0f0f0" textLength="64.0" lengthAdjust="spacingAndGlyphs">6562,00</text>
<text x="1433.8" y="918.7" font-size="18" fill="#f0f0f0" textLength="64.0" lengthAdjust="spacingAndGlyphs">6530,00</text>
<text x="1509.5" y="918.7" font-size="18" fill="#f0f0f0" textLength="64.0" lengthAdjust="spacingAndGlyphs">6529,00</text>
<text x="1585.5" y="918.7" font-size="18" fill="#f0f0f0" textLength="64.0" lengthAdjust="spacingAndGlyphs">6547,00</text>
<text x="1661.2" y="918.7" font-size="18" fill="#f0f0f0" textLength="64.0" lengthAdjust="spacingAndGlyphs">6493,00</text>
<text x="743.2" y="946.6" font-size="18" fill="#f4f4f4" textLength="67" lengthAdjust="spacingAndGlyphs">ΔE 2000</text>
<text x="893.0" y="946.6" font-size="18" fill="#f4f4f4" textLength="34.0" lengthAdjust="spacingAndGlyphs">1,34</text>
<text x="979.0" y="946.6" font-size="18" fill="#f4f4f4" textLength="34.0" lengthAdjust="spacingAndGlyphs">1,84</text>
<text x="1054.8" y="946.6" font-size="18" fill="#f4f4f4" textLength="34.0" lengthAdjust="spacingAndGlyphs">0,91</text>
<text x="1130.5" y="946.6" font-size="18" fill="#f4f4f4" textLength="34.0" lengthAdjust="spacingAndGlyphs">0,82</text>
<text x="1206.5" y="946.6" font-size="18" fill="#f4f4f4" textLength="34.0" lengthAdjust="spacingAndGlyphs">0,79</text>
<text x="1282.4" y="946.6" font-size="18" fill="#f4f4f4" textLength="34.0" lengthAdjust="spacingAndGlyphs">0,77</text>
<text x="1358.0" y="946.6" font-size="18" fill="#f4f4f4" textLength="34.0" lengthAdjust="spacingAndGlyphs">0,71</text>
<text x="1433.8" y="946.6" font-size="18" fill="#f4f4f4" textLength="34.0" lengthAdjust="spacingAndGlyphs">0,46</text>
<text x="1509.5" y="946.6" font-size="18" fill="#f4f4f4" textLength="34.0" lengthAdjust="spacingAndGlyphs">0,45</text>
<text x="1585.5" y="946.6" font-size="18" fill="#f4f4f4" textLength="34.0" lengthAdjust="spacingAndGlyphs">0,56</text>
<text x="1661.2" y="946.6" font-size="18" fill="#f4f4f4" textLength="34.0" lengthAdjust="spacingAndGlyphs">0,29</text>
<text x="72.6" y="1033.7" font-size="10.4" fill="#2e2828" text-anchor="middle" textLength="6.0" lengthAdjust="spacingAndGlyphs" stroke="#2e2828" stroke-width="0.3">0</text>
<text x="217.6" y="1033.7" font-size="10.4" fill="#2e2828" text-anchor="middle" textLength="12.0" lengthAdjust="spacingAndGlyphs" stroke="#2e2828" stroke-width="0.3">10</text>
<text x="362.5" y="1033.7" font-size="10.4" fill="#2e2828" text-anchor="middle" textLength="12.0" lengthAdjust="spacingAndGlyphs" stroke="#2e2828" stroke-width="0.3">20</text>
<text x="507.4" y="1033.7" font-size="10.4" fill="#2e2828" text-anchor="middle" textLength="12.0" lengthAdjust="spacingAndGlyphs" stroke="#2e2828" stroke-width="0.3">30</text>
<text x="652.4" y="1033.7" font-size="10.4" fill="#2e2828" text-anchor="middle" textLength="12.0" lengthAdjust="spacingAndGlyphs" stroke="#2e2828" stroke-width="0.3">40</text>
<text x="797.3" y="1033.7" font-size="10.4" fill="#2e2828" text-anchor="middle" textLength="12.0" lengthAdjust="spacingAndGlyphs" stroke="#2e2828" stroke-width="0.3">50</text>
<text x="942.3" y="1033.7" font-size="10.4" fill="#2e2828" text-anchor="middle" textLength="12.0" lengthAdjust="spacingAndGlyphs" stroke="#2e2828" stroke-width="0.3">60</text>
<text x="1087.2" y="1033.7" font-size="10.4" fill="#2e2828" text-anchor="middle" textLength="12.0" lengthAdjust="spacingAndGlyphs" stroke="#2e2828" stroke-width="0.3">70</text>
<text x="1232.2" y="1033.7" font-size="10.4" fill="#2e2828" text-anchor="middle" textLength="12.0" lengthAdjust="spacingAndGlyphs" stroke="#2e2828" stroke-width="0.3">80</text>
<text x="1377.1" y="1033.7" font-size="10.4" fill="#2e2828" text-anchor="middle" textLength="12.0" lengthAdjust="spacingAndGlyphs" stroke="#2e2828" stroke-width="0.3">90</text>
<text x="1522.8" y="1033.9" font-size="10.6" fill="#fff" text-anchor="middle" font-weight="bold" textLength="18.4" lengthAdjust="spacingAndGlyphs">100</text>
<circle cx="1621.4" cy="987" r="7.2" fill="url(#lgc)"/><path d="M1616.800 988.800h9.400l-4.700-4z" fill="#2c2c2c"/>
<rect x="1606.4" y="1003.6" width="28.8" height="29.100" rx="3.6" fill="url(#sqg)" stroke="#2a2a2a" stroke-width="2.2"/>
<rect x="1614.2" y="1011.1" width="13.5" height="6.900" fill="#242424"/><rect x="1614.2" y="1017.9" width="13.5" height="6.300" fill="#000"/>
<circle cx="1896" cy="993" r="10" fill="url(#dk2)"/>
<circle cx="1668.9" cy="993" r="9.9" fill="url(#lgc)"/>
<circle cx="1714.6" cy="993" r="9.9" fill="url(#lgc)"/>
<circle cx="1759.9" cy="993" r="9.9" fill="url(#lgc)"/>
<circle cx="1804.9" cy="993" r="9.9" fill="url(#lgc)"/>
<circle cx="1850" cy="993" r="9.9" fill="url(#lgc)"/>
<rect x="1665.1" y="989" width="7.8" height="7.9" fill="#2e2e2e"/>
<path d="M1712 988.8v10l8.600-4.900z" fill="#2e2e2e"/>
<path d="M1757.200 988.900h-2.200v8.600h2.200M1763 988.900h2.200v8.600h-2.200" fill="none" stroke="#2e2e2e" stroke-width="1.9"/><path d="M1757.300 993.100h2M1760.700 993.100h2" stroke="#2e2e2e" stroke-width="1.9"/>
<path d="M1805 992.900c-1.300-1.900-2.400-2.500-3.700-2.500a2.500 2.500 0 0 0 0 5c1.300 0 2.400-.6 3.700-2.500c1.300-1.900 2.400-2.500 3.700-2.500a2.500 2.500 0 0 1 0 5c-1.300 0-2.400-.6-3.700-2.500z" fill="none" stroke="#2e2e2e" stroke-width="1.7"/>
<path d="M1845.700 992.600a4.500 4.500 0 0 1 7.600-2.300M1854.300 994.600a4.500 4.500 0 0 1-7.600 2.300" fill="none" stroke="#2e2e2e" stroke-width="2"/><path d="M1855.600 987.600v4.400h-4.400z M1844.400 999.600v-4.400h4.400z" fill="#2e2e2e"/>
<circle cx="1676.9" cy="1024" r="10" fill="url(#lgc)"/><circle cx="1890" cy="1024" r="10" fill="url(#lgc)"/>
<path d="M1676.300 1019.200l-3.700 4.800l3.700 4.800M1680.800 1019.200l-3.700 4.800l3.700 4.800" fill="none" stroke="#2c2c2c" stroke-width="1.4"/>
<path d="M1886.100 1019.200l3.700 4.800l-3.700 4.800M1890.600 1019.200l3.700 4.800l-3.700 4.800" fill="none" stroke="#2c2c2c" stroke-width="1.4"/>
<text x="1704.2" y="1031.5" font-size="20.6" fill="#2a2a2a" textLength="49.4" lengthAdjust="spacingAndGlyphs" stroke="#2a2a2a" stroke-width="0.75">Back</text>
<text x="1810.8" y="1031.5" font-size="20.6" fill="#2a2a2a" textLength="51" lengthAdjust="spacingAndGlyphs" stroke="#2a2a2a" stroke-width="0.75">Next</text>
</svg>
</div>
</body></html>
